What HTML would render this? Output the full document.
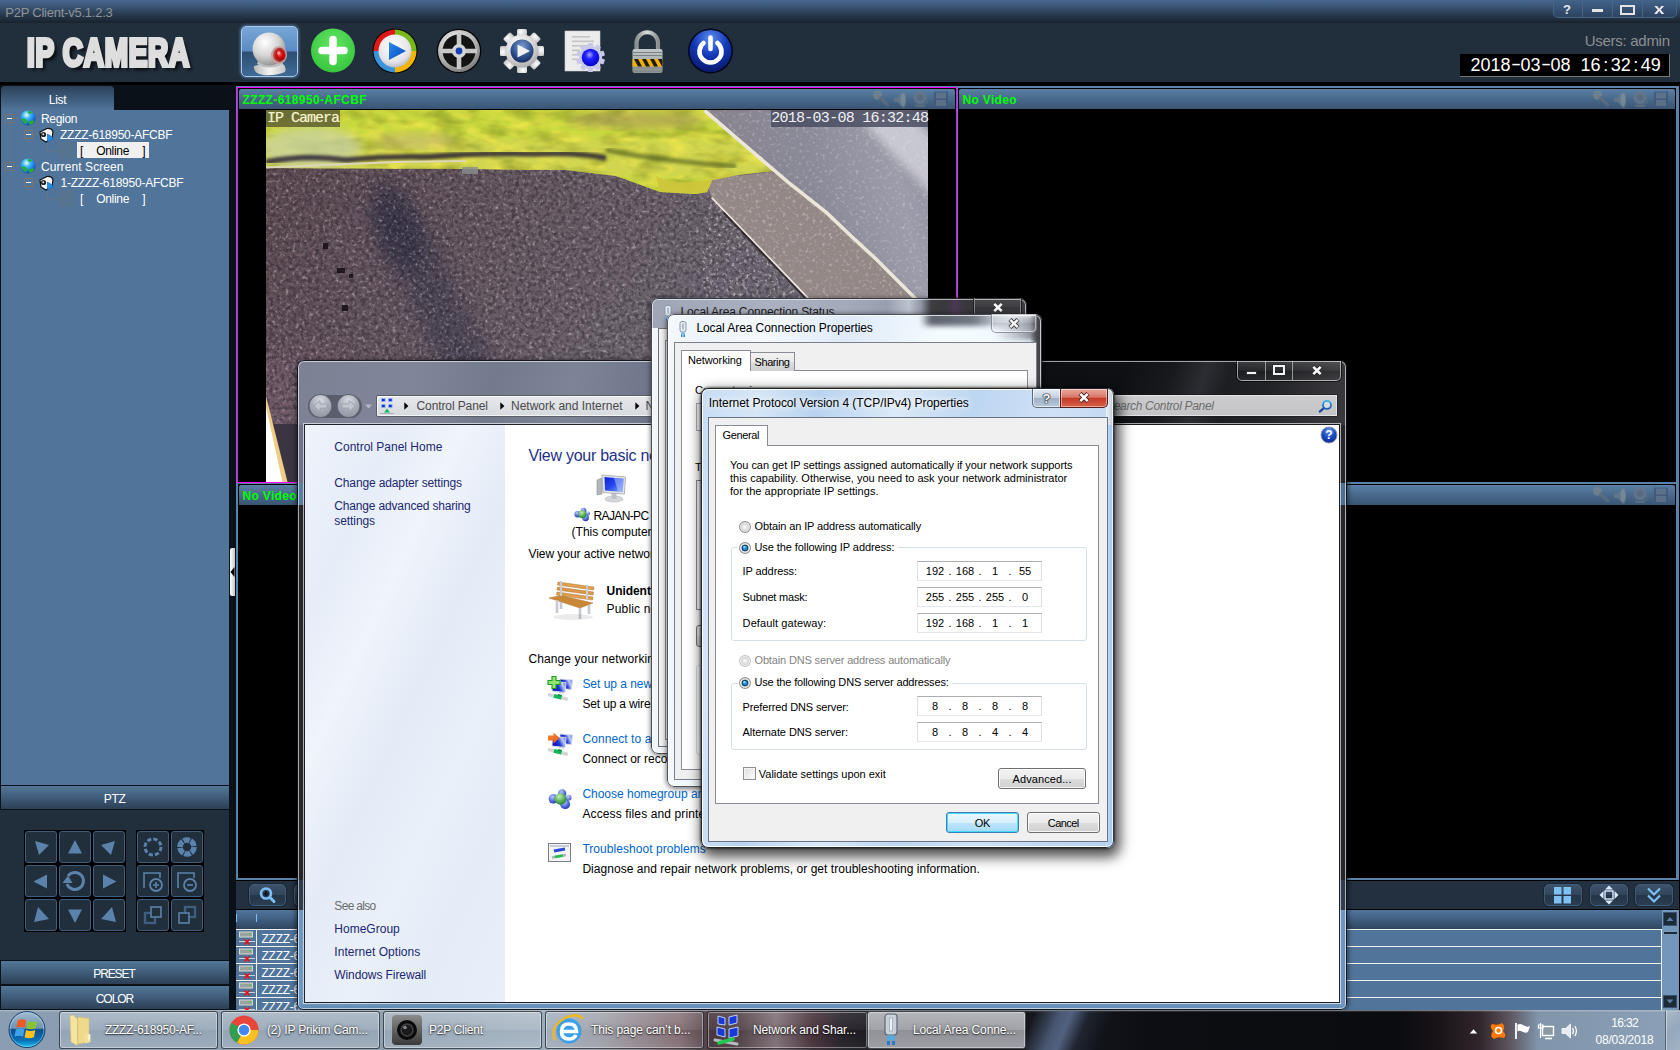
<!DOCTYPE html>
<html lang="en"><head><meta charset="utf-8"><title>P2P Client</title>
<style>
html,body{margin:0;padding:0;background:#000;}
body{width:1680px;height:1050px;overflow:hidden;position:relative;font-family:"Liberation Sans",sans-serif;}
.L{position:absolute;overflow:hidden;}
.L>div,.L>svg,.L>span{position:absolute;}
.t{white-space:pre;line-height:1;display:block;}
svg{overflow:hidden;display:block;}
</style></head>
<body>
<div class="L " style="left:0px;top:0px;width:1680px;height:1050px;background:#000;"><div style="left:0px;top:0px;width:1680px;height:23px;background:linear-gradient(#47688f 0%,#3c5878 25%,#2c4058 55%,#1f2c3b 85%,#19222d 100%);"></div>
<div style="left:0px;top:23px;width:1680px;height:59px;background:#212e3c;"></div>
<span class="t" style="left:5.3px;top:6px;font-size:13px;color:#8f9397;letter-spacing:-0.238px;">P2P Client-v5.1.2.3</span>
<div style="left:1553px;top:-1px;width:124px;height:19px;border:1px solid #466686;border-radius:0 0 5px 5px;box-sizing:border-box;background:linear-gradient(#43638a,#2c4260);"></div>
<div style="left:1582px;top:0px;width:1px;height:17px;background:#466686;"></div>
<div style="left:1612px;top:0px;width:1px;height:17px;background:#466686;"></div>
<div style="left:1642px;top:0px;width:1px;height:17px;background:#466686;"></div>
<span class="t" style="left:1563.02px;top:3.2px;font-size:13px;color:#e8e8e8;font-weight:bold;">?</span>
<div style="left:1592px;top:9px;width:11px;height:3px;background:#e4e4e4;"></div>
<div style="left:1620px;top:5px;width:15px;height:10px;border:2px solid #e4e4e4;box-sizing:border-box;"></div>
<span class="t" style="left:1655.33px;top:0.5px;font-size:15px;color:#e8e8e8;font-weight:bold;transform:scaleX(1.25);">x</span>
<span class="t" style="left:27.3px;top:33px;font-size:39px;color:#dedede;font-weight:bold;letter-spacing:1px;transform-origin:0 0;transform:scaleX(0.717);-webkit-text-stroke:4px #dedede;text-shadow:5px 4px 4px rgba(0,0,0,.8);">IP CAMERA</span>
<span class="t" style="left:1584.8px;top:32.8px;font-size:15px;color:#8e9093;letter-spacing:-0.287px;">Users: admin</span>
<div style="left:1460px;top:54px;width:210px;height:23px;background:#000;border-right:1px solid #777;border-bottom:1px solid #777;box-sizing:border-box;"></div>
<div class="t" style="left:1470.5px;top:54.5px;font-size:18px;color:#fff;line-height:20px;width:200px;">2018<span style="display:inline-block;width:10px;text-align:center;transform:scaleX(1.7) translateY(-1.5px);">-</span>03<span style="display:inline-block;width:10px;text-align:center;transform:scaleX(1.7) translateY(-1.5px);">-</span>08<span style="display:inline-block;width:10px;text-align:center;">&nbsp;</span>16<span style="display:inline-block;width:10px;text-align:center;">:</span>32<span style="display:inline-block;width:10px;text-align:center;">:</span>49</div>
<div style="left:241px;top:26px;width:57px;height:51px;border-radius:5px;background:linear-gradient(#79a6d6 0%,#5a8cc4 48%,#2e4f72 52%,#3f6a96 100%);border:1px solid #a8c8ea;box-sizing:border-box;box-shadow:0 0 3px 1px rgba(120,170,230,.55);"></div>
<svg style="left:241px;top:26px;" width="57" height="51" viewBox="0 0 57 51">
<defs>
 <radialGradient id="wc1" cx="0.38" cy="0.3" r="0.75"><stop offset="0" stop-color="#ffffff"/><stop offset="0.55" stop-color="#d4d4d4"/><stop offset="1" stop-color="#8c8c8c"/></radialGradient>
 <radialGradient id="wc2" cx="0.45" cy="0.4" r="0.6"><stop offset="0" stop-color="#ff5a5a"/><stop offset="0.5" stop-color="#e01010"/><stop offset="1" stop-color="#8a0000"/></radialGradient>
 <linearGradient id="wc3" x1="0" y1="0" x2="1" y2="0"><stop offset="0" stop-color="#b8b8b8"/><stop offset="0.5" stop-color="#f4f4f4"/><stop offset="1" stop-color="#c4c4c4"/></linearGradient>
</defs>
<path d="M13 40 Q12 47 22 49 Q34 50 44 46 Q46 41 42 38 Q30 35 13 40Z" fill="url(#wc3)"/>
<path d="M16 38 Q28 45 42 38 L40 33 L18 33Z" fill="#bdbdbd"/>
<circle cx="28" cy="23" r="16.5" fill="url(#wc1)"/>
<ellipse cx="38" cy="29" rx="8" ry="9" fill="#c9a0a0"/>
<ellipse cx="38.5" cy="29" rx="6.3" ry="7.2" fill="#b23a3a"/>
<ellipse cx="39" cy="29" rx="4.6" ry="5.4" fill="url(#wc2)"/>
<ellipse cx="37.8" cy="27" rx="1.6" ry="1.8" fill="#ff9c9c"/>
</svg>
<svg style="left:310px;top:28px;" width="46" height="46" viewBox="0 0 46 46">
<defs><radialGradient id="pl1" cx="0.5" cy="0.35" r="0.7"><stop offset="0" stop-color="#62e462"/><stop offset="1" stop-color="#35c43c"/></radialGradient></defs>
<circle cx="23" cy="22.5" r="22" fill="url(#pl1)"/>
<path d="M23 11.5 V33.5 M12 22.5 H34" stroke="#fff" stroke-width="7.5" stroke-linecap="round" fill="none"/>
</svg>
<svg style="left:372px;top:28px;" width="46" height="46" viewBox="0 0 46 46">
<defs><radialGradient id="mp1" cx="0.45" cy="0.35" r="0.7"><stop offset="0" stop-color="#ffffff"/><stop offset="0.7" stop-color="#e4e4e8"/><stop offset="1" stop-color="#b0b0b8"/></radialGradient>
<linearGradient id="mp2" x1="0" y1="0" x2="1" y2="1"><stop offset="0" stop-color="#2a8cf0"/><stop offset="1" stop-color="#0a48b8"/></linearGradient></defs>
<circle cx="23" cy="23" r="22.5" fill="#050505"/>
<path d="M23 23 L23 1.5 A21.5 21.5 0 0 0 1.5 23Z" fill="#e01818"/>
<path d="M23 23 L44.5 23 A21.5 21.5 0 0 0 23 1.5Z" fill="#78b818"/>
<path d="M23 23 L1.5 23 A21.5 21.5 0 0 0 23 44.5Z" fill="#3a94dc"/>
<path d="M23 23 L23 44.5 A21.5 21.5 0 0 0 44.5 23Z" fill="#f4b400"/>
<circle cx="23" cy="23" r="16.5" fill="url(#mp1)"/>
<path d="M17 14 L34 23 L17 32Z" fill="url(#mp2)"/>
</svg>
<svg style="left:436px;top:28px;" width="46" height="46" viewBox="0 0 46 46">
<defs><radialGradient id="fr1" cx="0.4" cy="0.3" r="0.8"><stop offset="0" stop-color="#f4f4f4"/><stop offset="0.6" stop-color="#b4b4b4"/><stop offset="1" stop-color="#6a6a6a"/></radialGradient></defs>
<circle cx="23" cy="23" r="22.3" fill="#060606"/>
<circle cx="23" cy="23" r="21" fill="url(#fr1)"/>
<circle cx="23" cy="23" r="16.5" fill="#141414"/>
<path d="M23 5 V41 M5 23 H41" stroke="#c8c8c8" stroke-width="4.6"/>
<circle cx="23" cy="23" r="7" fill="#d4d4d4"/>
<circle cx="23" cy="23" r="3.4" fill="#1840b0"/>
</svg>
<svg style="left:499px;top:28px;" width="46" height="46" viewBox="0 0 46 46">
<defs><radialGradient id="g1" cx="0.4" cy="0.3" r="0.8"><stop offset="0" stop-color="#ffffff"/><stop offset="0.6" stop-color="#d2d2d2"/><stop offset="1" stop-color="#a0a0a0"/></radialGradient>
<radialGradient id="g2" cx="0.5" cy="0.3" r="0.8"><stop offset="0" stop-color="#7a9cd0"/><stop offset="0.6" stop-color="#2a4a88"/><stop offset="1" stop-color="#10204a"/></radialGradient></defs>
<g transform="translate(23,23)" fill="url(#g1)"><rect x="-5" y="-22" width="10" height="9" rx="1.5" transform="rotate(0)"/><rect x="-5" y="-22" width="10" height="9" rx="1.5" transform="rotate(45)"/><rect x="-5" y="-22" width="10" height="9" rx="1.5" transform="rotate(90)"/><rect x="-5" y="-22" width="10" height="9" rx="1.5" transform="rotate(135)"/><rect x="-5" y="-22" width="10" height="9" rx="1.5" transform="rotate(180)"/><rect x="-5" y="-22" width="10" height="9" rx="1.5" transform="rotate(225)"/><rect x="-5" y="-22" width="10" height="9" rx="1.5" transform="rotate(270)"/><rect x="-5" y="-22" width="10" height="9" rx="1.5" transform="rotate(315)"/><circle r="16.5"/></g>
<circle cx="23" cy="23" r="11.5" fill="url(#g2)"/>
<path d="M18.5 16.5 L31 23 L18.5 29.5Z" fill="#f0f0f0"/>
</svg>
<svg style="left:563px;top:28px;" width="46" height="46" viewBox="0 0 46 46">
<defs><radialGradient id="d2" cx="0.45" cy="0.35" r="0.7"><stop offset="0" stop-color="#a8a8ff"/><stop offset="0.35" stop-color="#2020ff"/><stop offset="1" stop-color="#0000c0"/></radialGradient></defs>
<rect x="2" y="3" width="35" height="40" fill="#ececec" stroke="#d0d0d0" stroke-width="0.6"/>
<g fill="#c4c4c4"><rect x="9" y="8" width="18" height="1.6"/><rect x="9" y="12.5" width="22" height="1.6"/><rect x="9" y="17" width="20" height="1.6"/><rect x="9" y="21.5" width="8" height="1.6"/><rect x="9" y="26" width="6" height="1.6"/><rect x="9" y="30.5" width="6" height="1.6"/></g>
<g transform="translate(27.5,29.5)" fill="#c8c8e8"><rect x="-2.6" y="-14.5" width="5.2" height="5" rx="1" transform="rotate(0)"/><rect x="-2.6" y="-14.5" width="5.2" height="5" rx="1" transform="rotate(36)"/><rect x="-2.6" y="-14.5" width="5.2" height="5" rx="1" transform="rotate(72)"/><rect x="-2.6" y="-14.5" width="5.2" height="5" rx="1" transform="rotate(108)"/><rect x="-2.6" y="-14.5" width="5.2" height="5" rx="1" transform="rotate(144)"/><rect x="-2.6" y="-14.5" width="5.2" height="5" rx="1" transform="rotate(180)"/><rect x="-2.6" y="-14.5" width="5.2" height="5" rx="1" transform="rotate(216)"/><rect x="-2.6" y="-14.5" width="5.2" height="5" rx="1" transform="rotate(252)"/><rect x="-2.6" y="-14.5" width="5.2" height="5" rx="1" transform="rotate(288)"/><rect x="-2.6" y="-14.5" width="5.2" height="5" rx="1" transform="rotate(324)"/><circle r="11.5"/></g>
<circle cx="27.5" cy="29.5" r="8.8" fill="url(#d2)"/>
</svg>
<svg style="left:626px;top:27px;" width="44" height="48" viewBox="0 0 44 48">
<defs><linearGradient id="lk1" x1="0" y1="0" x2="1" y2="0"><stop offset="0" stop-color="#8a9090"/><stop offset="0.5" stop-color="#d8dcdc"/><stop offset="1" stop-color="#8a9090"/></linearGradient>
<linearGradient id="lk2" x1="0" y1="0" x2="0" y2="1"><stop offset="0" stop-color="#c4c8c8"/><stop offset="1" stop-color="#8c9292"/></linearGradient></defs>
<path d="M10.5 24 V15 A10.8 10.8 0 0 1 32 15 V24" fill="none" stroke="url(#lk1)" stroke-width="4.2"/>
<rect x="6.5" y="22" width="30" height="24" rx="2" fill="url(#lk2)"/>
<g stroke="#7c8282" stroke-width="1"><path d="M6.5 25.5h30M6.5 28.5h30M6.5 41h30M6.5 44h30"/></g>
<rect x="6.5" y="32" width="30" height="7.5" fill="#f4b000"/>
<g fill="#1c1c1c"><path d="M8 32 h4 l4 7.5 h-4z"/><path d="M16 32 h4 l4 7.5 h-4z"/><path d="M24 32 h4 l4 7.5 h-4z"/><path d="M32 32 h4 l0.5 1 v6.5 h-0.5z"/></g>
</svg>
<svg style="left:687px;top:28px;" width="46" height="46" viewBox="0 0 46 46">
<defs><radialGradient id="pw1" cx="0.5" cy="0.2" r="0.9"><stop offset="0" stop-color="#5a8cf0"/><stop offset="0.45" stop-color="#1438b8"/><stop offset="1" stop-color="#04125a"/></radialGradient></defs>
<circle cx="23.5" cy="23" r="22.5" fill="#03061a"/>
<circle cx="23.5" cy="23" r="21" fill="url(#pw1)"/>
<path d="M16.5 15 A11 11 0 1 0 30.5 15" fill="none" stroke="#fff" stroke-width="4.6" stroke-linecap="round"/>
<path d="M23.5 9.5 V21" stroke="#fff" stroke-width="4.6" stroke-linecap="round"/>
</svg>
<div style="left:0px;top:85px;width:236px;height:925px;background:#0b1118;"></div>
<div style="left:1px;top:86px;width:113px;height:24px;background:linear-gradient(#2d4157 0%,#3a5573 40%,#50749a 100%);border-radius:4px 4px 0 0;"></div>
<span class="t" style="left:48.7px;top:93.9px;font-size:12px;color:#fff;letter-spacing:-0.229px;">List</span>
<div style="left:1px;top:110px;width:228px;height:675px;background:#50749a;"></div>
<div style="left:9px;top:123px;width:1px;height:40px;background-image:linear-gradient(#7c746b 50%,transparent 50%);background-size:1px 2px;"></div>
<div style="left:28px;top:139px;width:1px;height:4px;background-image:linear-gradient(#7c746b 50%,transparent 50%);background-size:1px 2px;"></div>
<div style="left:47px;top:143px;width:1px;height:8px;background-image:linear-gradient(#7c746b 50%,transparent 50%);background-size:1px 2px;"></div>
<div style="left:47px;top:150px;width:26px;height:1px;background-image:linear-gradient(90deg,#7c746b 50%,transparent 50%);background-size:2px 1px;"></div>
<div style="left:28px;top:187px;width:1px;height:4px;background-image:linear-gradient(#7c746b 50%,transparent 50%);background-size:1px 2px;"></div>
<div style="left:47px;top:191px;width:1px;height:8px;background-image:linear-gradient(#7c746b 50%,transparent 50%);background-size:1px 2px;"></div>
<div style="left:47px;top:198px;width:26px;height:1px;background-image:linear-gradient(90deg,#7c746b 50%,transparent 50%);background-size:2px 1px;"></div>
<div style="left:14px;top:118px;width:6px;height:1px;background-image:linear-gradient(90deg,#7c746b 50%,transparent 50%);background-size:2px 1px;"></div>
<div style="left:33px;top:134px;width:6px;height:1px;background-image:linear-gradient(90deg,#7c746b 50%,transparent 50%);background-size:2px 1px;"></div>
<div style="left:14px;top:166px;width:6px;height:1px;background-image:linear-gradient(90deg,#7c746b 50%,transparent 50%);background-size:2px 1px;"></div>
<div style="left:33px;top:182px;width:6px;height:1px;background-image:linear-gradient(90deg,#7c746b 50%,transparent 50%);background-size:2px 1px;"></div>
<div style="left:58px;top:142px;width:16px;height:17px;background:#56738f;"></div>
<div style="left:58px;top:190px;width:16px;height:17px;background:#56738f;"></div>
<div style="left:5px;top:114px;width:9px;height:9px;border:1px solid #7c746b;box-sizing:border-box;background:#50749a;"></div>
<div style="left:7px;top:118px;width:5px;height:1px;background:#fff;"></div>
<div style="left:24px;top:130px;width:9px;height:9px;border:1px solid #7c746b;box-sizing:border-box;background:#50749a;"></div>
<div style="left:26px;top:134px;width:5px;height:1px;background:#fff;"></div>
<div style="left:5px;top:162px;width:9px;height:9px;border:1px solid #7c746b;box-sizing:border-box;background:#50749a;"></div>
<div style="left:7px;top:166px;width:5px;height:1px;background:#fff;"></div>
<div style="left:24px;top:178px;width:9px;height:9px;border:1px solid #7c746b;box-sizing:border-box;background:#50749a;"></div>
<div style="left:26px;top:182px;width:5px;height:1px;background:#fff;"></div>
<svg style="left:20px;top:110px;" width="16" height="16" viewBox="0 0 16 16">
<defs><radialGradient id="gl1" cx="0.4" cy="0.3" r="0.75"><stop offset="0" stop-color="#e8faff"/><stop offset="0.35" stop-color="#38b8ff"/><stop offset="1" stop-color="#0838c0"/></radialGradient></defs>
<circle cx="8" cy="8" r="7.6" fill="url(#gl1)"/>
<path d="M1.5 9 Q4 7.5 6 9.5 Q8 12 5.5 14.5 Q2.5 13 1.5 9Z M9.5 11 Q12 9.5 14.5 11 Q13 14.5 9.5 15.3 Q8.5 13 9.5 11Z M8 1 Q11 1 12.5 3 Q10 4.5 8 3.2Z" fill="#28b028"/>
</svg>
<svg style="left:20px;top:158px;" width="16" height="16" viewBox="0 0 16 16">
<defs><radialGradient id="gl1" cx="0.4" cy="0.3" r="0.75"><stop offset="0" stop-color="#e8faff"/><stop offset="0.35" stop-color="#38b8ff"/><stop offset="1" stop-color="#0838c0"/></radialGradient></defs>
<circle cx="8" cy="8" r="7.6" fill="url(#gl1)"/>
<path d="M1.5 9 Q4 7.5 6 9.5 Q8 12 5.5 14.5 Q2.5 13 1.5 9Z M9.5 11 Q12 9.5 14.5 11 Q13 14.5 9.5 15.3 Q8.5 13 9.5 11Z M8 1 Q11 1 12.5 3 Q10 4.5 8 3.2Z" fill="#28b028"/>
</svg>
<svg style="left:38px;top:126.5px;" width="17" height="16" viewBox="0 0 17 16">
<path d="M2 5 L9 1.5 Q14 1 15 5 L14 11 L8 15 L3 12 Z" fill="#f4f4f4" stroke="#111" stroke-width="1.2"/>
<circle cx="5.5" cy="7.5" r="2.6" fill="#222"/><circle cx="5.2" cy="7.2" r="1" fill="#ddd"/>
<path d="M9.5 7 L15.5 11 L9.5 15.5Z" fill="#1e90e8" stroke="#0a5aa8" stroke-width="0.6"/>
</svg>
<svg style="left:38px;top:174.5px;" width="17" height="16" viewBox="0 0 17 16">
<path d="M2 5 L9 1.5 Q14 1 15 5 L14 11 L8 15 L3 12 Z" fill="#f4f4f4" stroke="#111" stroke-width="1.2"/>
<circle cx="5.5" cy="7.5" r="2.6" fill="#222"/><circle cx="5.2" cy="7.2" r="1" fill="#ddd"/>
<path d="M9.5 7 L15.5 11 L9.5 15.5Z" fill="#1e90e8" stroke="#0a5aa8" stroke-width="0.6"/>
</svg>
<span class="t" style="left:41px;top:112.6px;font-size:12px;color:#fff;letter-spacing:-0.306px;">Region</span>
<span class="t" style="left:60px;top:128.6px;font-size:12px;color:#fff;letter-spacing:-0.263px;">ZZZZ-618950-AFCBF</span>
<div style="left:77px;top:142px;width:72px;height:16px;background:#f0f0f0;"></div>
<span class="t" style="left:80px;top:144.6px;font-size:12px;color:#000;letter-spacing:-0.3px;word-spacing:1.35px;">[   Online   ]</span>
<span class="t" style="left:41px;top:160.6px;font-size:12px;color:#fff;letter-spacing:0.087px;">Current Screen</span>
<span class="t" style="left:60.5px;top:176.6px;font-size:12px;color:#fff;letter-spacing:-0.242px;">1-ZZZZ-618950-AFCBF</span>
<span class="t" style="left:80px;top:192.6px;font-size:12px;color:#fff;letter-spacing:-0.3px;word-spacing:1.35px;">[   Online   ]</span>
<div style="left:230px;top:548px;width:5px;height:48px;background:linear-gradient(90deg,#fff,#c8c8c8);border-radius:2px 0 0 2px;"></div>
<svg style="left:230px;top:566px;" width="5" height="12" viewBox="0 0 5 12"><path d="M4.5 1 L0.5 6 L4.5 11Z" fill="#000"/></svg>
<div style="left:1px;top:786px;width:228px;height:23px;background:linear-gradient(#537797 0%,#436280 40%,#2c3f55 100%);"></div>
<span class="t" style="left:103.8px;top:792.8px;font-size:12px;color:#fff;letter-spacing:-0.336px;">PTZ</span>
<div style="left:0px;top:810px;width:229px;height:150px;background:#212e3c;"></div>
<div style="left:1px;top:961px;width:228px;height:23px;background:linear-gradient(#537797 0%,#436280 40%,#2c3f55 100%);"></div>
<span class="t" style="left:93.25px;top:967.8px;font-size:12px;color:#fff;letter-spacing:-1.103px;">PRESET</span>
<div style="left:1px;top:986px;width:228px;height:23px;background:linear-gradient(#537797 0%,#436280 40%,#2c3f55 100%);"></div>
<span class="t" style="left:95.75px;top:992.8px;font-size:12px;color:#fff;letter-spacing:-1.047px;">COLOR</span>
<div style="left:24px;top:830px;width:34px;height:34px;background:#000;"></div>
<div style="left:25px;top:831px;width:32px;height:32px;border:1px solid #3f5d7c;border-radius:3px;box-sizing:border-box;background:#212e3c;"></div>
<svg style="left:24px;top:830px;" width="34" height="34" viewBox="0 0 34 34"><path d="M11 11 L25 15 L15 25Z" fill="#5a82aa"/></svg>
<div style="left:58px;top:830px;width:34px;height:34px;background:#000;"></div>
<div style="left:59px;top:831px;width:32px;height:32px;border:1px solid #3f5d7c;border-radius:3px;box-sizing:border-box;background:#212e3c;"></div>
<svg style="left:58px;top:830px;" width="34" height="34" viewBox="0 0 34 34"><path d="M0 -7.5 L7 6 L-7 6Z" fill="#5a82aa" transform="translate(17,17.5) rotate(0)"/></svg>
<div style="left:92px;top:830px;width:34px;height:34px;background:#000;"></div>
<div style="left:93px;top:831px;width:32px;height:32px;border:1px solid #3f5d7c;border-radius:3px;box-sizing:border-box;background:#212e3c;"></div>
<svg style="left:92px;top:830px;" width="34" height="34" viewBox="0 0 34 34"><path d="M23 11 L9 15 L19 25Z" fill="#5a82aa"/></svg>
<div style="left:24px;top:864px;width:34px;height:34px;background:#000;"></div>
<div style="left:25px;top:865px;width:32px;height:32px;border:1px solid #3f5d7c;border-radius:3px;box-sizing:border-box;background:#212e3c;"></div>
<svg style="left:24px;top:864px;" width="34" height="34" viewBox="0 0 34 34"><path d="M0 -7.5 L7 6 L-7 6Z" fill="#5a82aa" transform="translate(17,17.5) rotate(270)"/></svg>
<div style="left:58px;top:864px;width:34px;height:34px;background:#000;"></div>
<div style="left:59px;top:865px;width:32px;height:32px;border:1px solid #3f5d7c;border-radius:3px;box-sizing:border-box;background:#212e3c;"></div>
<svg style="left:58px;top:864px;" width="34" height="34" viewBox="0 0 34 34"><path d="M10 12 A8.5 8.5 0 1 1 9 20" fill="none" stroke="#5a82aa" stroke-width="3"/><path d="M4.5 19 L10 11.5 L14.5 19Z" fill="#5a82aa"/></svg>
<div style="left:92px;top:864px;width:34px;height:34px;background:#000;"></div>
<div style="left:93px;top:865px;width:32px;height:32px;border:1px solid #3f5d7c;border-radius:3px;box-sizing:border-box;background:#212e3c;"></div>
<svg style="left:92px;top:864px;" width="34" height="34" viewBox="0 0 34 34"><path d="M0 -7.5 L7 6 L-7 6Z" fill="#5a82aa" transform="translate(17,17.5) rotate(90)"/></svg>
<div style="left:24px;top:898px;width:34px;height:34px;background:#000;"></div>
<div style="left:25px;top:899px;width:32px;height:32px;border:1px solid #3f5d7c;border-radius:3px;box-sizing:border-box;background:#212e3c;"></div>
<svg style="left:24px;top:898px;" width="34" height="34" viewBox="0 0 34 34"><path d="M14 9 L25 21 L10 24Z" fill="#5a82aa"/></svg>
<div style="left:58px;top:898px;width:34px;height:34px;background:#000;"></div>
<div style="left:59px;top:899px;width:32px;height:32px;border:1px solid #3f5d7c;border-radius:3px;box-sizing:border-box;background:#212e3c;"></div>
<svg style="left:58px;top:898px;" width="34" height="34" viewBox="0 0 34 34"><path d="M0 -7.5 L7 6 L-7 6Z" fill="#5a82aa" transform="translate(17,17.5) rotate(180)"/></svg>
<div style="left:92px;top:898px;width:34px;height:34px;background:#000;"></div>
<div style="left:93px;top:899px;width:32px;height:32px;border:1px solid #3f5d7c;border-radius:3px;box-sizing:border-box;background:#212e3c;"></div>
<svg style="left:92px;top:898px;" width="34" height="34" viewBox="0 0 34 34"><path d="M20 9 L9 21 L24 24Z" fill="#5a82aa"/></svg>
<div style="left:136px;top:830px;width:34px;height:34px;background:#000;"></div>
<div style="left:137px;top:831px;width:32px;height:32px;border:1px solid #3f5d7c;border-radius:3px;box-sizing:border-box;background:#212e3c;"></div>
<svg style="left:136px;top:830px;" width="34" height="34" viewBox="0 0 34 34"><circle cx="17" cy="17" r="8" fill="none" stroke="#5a82aa" stroke-width="3" stroke-dasharray="4.2 2.1"/></svg>
<div style="left:170px;top:830px;width:34px;height:34px;background:#000;"></div>
<div style="left:171px;top:831px;width:32px;height:32px;border:1px solid #3f5d7c;border-radius:3px;box-sizing:border-box;background:#212e3c;"></div>
<svg style="left:170px;top:830px;" width="34" height="34" viewBox="0 0 34 34"><circle cx="17" cy="17" r="7" fill="none" stroke="#5a82aa" stroke-width="5.5" stroke-dasharray="6.3 1"/></svg>
<div style="left:136px;top:864px;width:34px;height:34px;background:#000;"></div>
<div style="left:137px;top:865px;width:32px;height:32px;border:1px solid #3f5d7c;border-radius:3px;box-sizing:border-box;background:#212e3c;"></div>
<svg style="left:136px;top:864px;" width="34" height="34" viewBox="0 0 34 34"><path d="M8 24 V9 H24 V14" fill="none" stroke="#5a82aa" stroke-width="1.6"/><circle cx="20" cy="21" r="6" fill="none" stroke="#5a82aa" stroke-width="1.8"/><path d="M17 21h6M20 18v6" stroke="#5a82aa" stroke-width="1.6"/></svg>
<div style="left:170px;top:864px;width:34px;height:34px;background:#000;"></div>
<div style="left:171px;top:865px;width:32px;height:32px;border:1px solid #3f5d7c;border-radius:3px;box-sizing:border-box;background:#212e3c;"></div>
<svg style="left:170px;top:864px;" width="34" height="34" viewBox="0 0 34 34"><path d="M8 24 V9 H24 V14" fill="none" stroke="#5a82aa" stroke-width="1.6"/><circle cx="20" cy="21" r="6" fill="none" stroke="#5a82aa" stroke-width="1.8"/><path d="M17 21h6" stroke="#5a82aa" stroke-width="1.6"/></svg>
<div style="left:136px;top:898px;width:34px;height:34px;background:#000;"></div>
<div style="left:137px;top:899px;width:32px;height:32px;border:1px solid #3f5d7c;border-radius:3px;box-sizing:border-box;background:#212e3c;"></div>
<svg style="left:136px;top:898px;" width="34" height="34" viewBox="0 0 34 34"><rect x="9" y="15" width="10" height="10" fill="none" stroke="#3f5d7c" stroke-width="2.4"/><rect x="15" y="9" width="10" height="10" fill="#212e3c" stroke="#5a82aa" stroke-width="1.6"/></svg>
<div style="left:170px;top:898px;width:34px;height:34px;background:#000;"></div>
<div style="left:171px;top:899px;width:32px;height:32px;border:1px solid #3f5d7c;border-radius:3px;box-sizing:border-box;background:#212e3c;"></div>
<svg style="left:170px;top:898px;" width="34" height="34" viewBox="0 0 34 34"><rect x="15" y="9" width="10" height="10" fill="none" stroke="#3f5d7c" stroke-width="2.4"/><rect x="9" y="15" width="10" height="10" fill="#212e3c" stroke="#5a82aa" stroke-width="1.6"/></svg>
<div style="left:236px;top:86px;width:1443px;height:794px;background:#5b83aa;"></div>
<div style="left:237px;top:87px;width:720px;height:396px;background:#000;border:1px solid #ff00ff;box-sizing:border-box;"></div>
<div style="left:239px;top:89px;width:716px;height:20px;background:linear-gradient(#5a80a6 0%,#4a6b8d 45%,#3a5574 100%);border-radius:2px 2px 0 0;"></div>
<span class="t" style="left:242.5px;top:93.6px;font-size:12px;color:#00ff00;font-weight:bold;letter-spacing:0.374px;">ZZZZ-618950-AFCBF</span>
<svg style="left:872px;top:89px;" width="83" height="20" viewBox="0 0 83 20">
<g fill="#6d7f90" stroke="none" opacity="0.85">
 <circle cx="5.5" cy="6" r="4.6" fill="#71838f"/>
 <path d="M6.5 9.5 L9.5 6.8 L17 15.5 Q17.5 17.5 15 17.5 Z" fill="#5c6d7e"/>
 <path d="M22.5 8.5 h3 l5.5 -6.5 q3 0 3 8.5 q0 8.5 -3 8.5 l-5.5 -6 h-3 q-1.5 -2.2 0 -4.5z" fill="#667889"/>
 <ellipse cx="31" cy="10.5" rx="2.6" ry="6.5" fill="#7c8d9c"/>
 <circle cx="48" cy="8.5" r="6.6" fill="#64768a"/>
 <circle cx="48" cy="8.5" r="3.2" fill="#5a6b7e"/>
 <rect x="43" y="15.6" width="10" height="2.4" rx="1" fill="#5e6f80"/>
 <path d="M55.5 7 q1.5 5 -2.5 9" fill="none" stroke="#5e6f80" stroke-width="1.2"/>
 <rect x="62" y="2.5" width="14" height="15.5" fill="#41597a"/>
 <rect x="64" y="3.5" width="10" height="6" fill="#5f728a"/>
 <rect x="64" y="11" width="10" height="6" fill="#5f728a"/>
</g></svg>
<div style="left:957px;top:87px;width:720px;height:396px;background:#000;border:1px solid #5b83aa;box-sizing:border-box;"></div>
<div style="left:959px;top:89px;width:716px;height:20px;background:linear-gradient(#5a80a6 0%,#4a6b8d 45%,#3a5574 100%);border-radius:2px 2px 0 0;"></div>
<span class="t" style="left:962.5px;top:93.6px;font-size:12px;color:#00ff00;font-weight:bold;letter-spacing:0.315px;">No Video</span>
<svg style="left:1592px;top:89px;" width="83" height="20" viewBox="0 0 83 20">
<g fill="#6d7f90" stroke="none" opacity="0.85">
 <circle cx="5.5" cy="6" r="4.6" fill="#71838f"/>
 <path d="M6.5 9.5 L9.5 6.8 L17 15.5 Q17.5 17.5 15 17.5 Z" fill="#5c6d7e"/>
 <path d="M22.5 8.5 h3 l5.5 -6.5 q3 0 3 8.5 q0 8.5 -3 8.5 l-5.5 -6 h-3 q-1.5 -2.2 0 -4.5z" fill="#667889"/>
 <ellipse cx="31" cy="10.5" rx="2.6" ry="6.5" fill="#7c8d9c"/>
 <circle cx="48" cy="8.5" r="6.6" fill="#64768a"/>
 <circle cx="48" cy="8.5" r="3.2" fill="#5a6b7e"/>
 <rect x="43" y="15.6" width="10" height="2.4" rx="1" fill="#5e6f80"/>
 <path d="M55.5 7 q1.5 5 -2.5 9" fill="none" stroke="#5e6f80" stroke-width="1.2"/>
 <rect x="62" y="2.5" width="14" height="15.5" fill="#41597a"/>
 <rect x="64" y="3.5" width="10" height="6" fill="#5f728a"/>
 <rect x="64" y="11" width="10" height="6" fill="#5f728a"/>
</g></svg>
<div style="left:958px;top:87px;width:718px;height:1px;background:#5b83aa;"></div>
<div style="left:237px;top:483px;width:720px;height:396px;background:#000;border:1px solid #5b83aa;box-sizing:border-box;"></div>
<div style="left:239px;top:485px;width:716px;height:20px;background:linear-gradient(#5a80a6 0%,#4a6b8d 45%,#3a5574 100%);border-radius:2px 2px 0 0;"></div>
<span class="t" style="left:242.5px;top:489.6px;font-size:12px;color:#00ff00;font-weight:bold;letter-spacing:0.315px;">No Video</span>
<svg style="left:872px;top:485px;" width="83" height="20" viewBox="0 0 83 20">
<g fill="#6d7f90" stroke="none" opacity="0.85">
 <circle cx="5.5" cy="6" r="4.6" fill="#71838f"/>
 <path d="M6.5 9.5 L9.5 6.8 L17 15.5 Q17.5 17.5 15 17.5 Z" fill="#5c6d7e"/>
 <path d="M22.5 8.5 h3 l5.5 -6.5 q3 0 3 8.5 q0 8.5 -3 8.5 l-5.5 -6 h-3 q-1.5 -2.2 0 -4.5z" fill="#667889"/>
 <ellipse cx="31" cy="10.5" rx="2.6" ry="6.5" fill="#7c8d9c"/>
 <circle cx="48" cy="8.5" r="6.6" fill="#64768a"/>
 <circle cx="48" cy="8.5" r="3.2" fill="#5a6b7e"/>
 <rect x="43" y="15.6" width="10" height="2.4" rx="1" fill="#5e6f80"/>
 <path d="M55.5 7 q1.5 5 -2.5 9" fill="none" stroke="#5e6f80" stroke-width="1.2"/>
 <rect x="62" y="2.5" width="14" height="15.5" fill="#41597a"/>
 <rect x="64" y="3.5" width="10" height="6" fill="#5f728a"/>
 <rect x="64" y="11" width="10" height="6" fill="#5f728a"/>
</g></svg>
<div style="left:957px;top:483px;width:720px;height:396px;background:#000;border:1px solid #5b83aa;box-sizing:border-box;"></div>
<div style="left:959px;top:485px;width:716px;height:20px;background:linear-gradient(#5a80a6 0%,#4a6b8d 45%,#3a5574 100%);border-radius:2px 2px 0 0;"></div>
<span class="t" style="left:962.5px;top:489.6px;font-size:12px;color:#00ff00;font-weight:bold;letter-spacing:0.315px;">No Video</span>
<svg style="left:1592px;top:485px;" width="83" height="20" viewBox="0 0 83 20">
<g fill="#6d7f90" stroke="none" opacity="0.85">
 <circle cx="5.5" cy="6" r="4.6" fill="#71838f"/>
 <path d="M6.5 9.5 L9.5 6.8 L17 15.5 Q17.5 17.5 15 17.5 Z" fill="#5c6d7e"/>
 <path d="M22.5 8.5 h3 l5.5 -6.5 q3 0 3 8.5 q0 8.5 -3 8.5 l-5.5 -6 h-3 q-1.5 -2.2 0 -4.5z" fill="#667889"/>
 <ellipse cx="31" cy="10.5" rx="2.6" ry="6.5" fill="#7c8d9c"/>
 <circle cx="48" cy="8.5" r="6.6" fill="#64768a"/>
 <circle cx="48" cy="8.5" r="3.2" fill="#5a6b7e"/>
 <rect x="43" y="15.6" width="10" height="2.4" rx="1" fill="#5e6f80"/>
 <path d="M55.5 7 q1.5 5 -2.5 9" fill="none" stroke="#5e6f80" stroke-width="1.2"/>
 <rect x="62" y="2.5" width="14" height="15.5" fill="#41597a"/>
 <rect x="64" y="3.5" width="10" height="6" fill="#5f728a"/>
 <rect x="64" y="11" width="10" height="6" fill="#5f728a"/>
</g></svg>
<svg style="left:266px;top:110px;" width="662" height="372" viewBox="0 0 662 372">
<defs>
 <filter id="spk" x="0" y="0" width="100%" height="100%" color-interpolation-filters="sRGB"><feTurbulence type="fractalNoise" baseFrequency="0.3" numOctaves="2" seed="7"/><feColorMatrix values="0 0 0 0 0.96  0 0 0 0 0.94  0 0 0 0 0.96  3.4 0 0 0 -1.85"/></filter>
 <filter id="spd" x="0" y="0" width="100%" height="100%" color-interpolation-filters="sRGB"><feTurbulence type="fractalNoise" baseFrequency="0.26" numOctaves="2" seed="23"/><feColorMatrix values="0 0 0 0 0.1  0 0 0 0 0.08  0 0 0 0 0.12  0 2.8 0 0 -1.1"/></filter>
 <filter id="gz" x="0" y="0" width="100%" height="100%" color-interpolation-filters="sRGB"><feTurbulence type="fractalNoise" baseFrequency="0.03 0.07" numOctaves="3" seed="5"/><feColorMatrix values="0 0 0 0 0.45  0 0 0 0 0.50  0 0 0 0 0.12  2.6 0 0 0 -1.15"/></filter>
 <filter id="gy" x="0" y="0" width="100%" height="100%" color-interpolation-filters="sRGB"><feTurbulence type="fractalNoise" baseFrequency="0.05 0.09" numOctaves="2" seed="41"/><feColorMatrix values="0 0 0 0 0.93  0 0 0 0 0.9  0 0 0 0 0.3  0 2.6 0 0 -1.15"/></filter>
 <filter id="b14"><feGaussianBlur stdDeviation="13"/></filter>
 <filter id="b9"><feGaussianBlur stdDeviation="9"/></filter>
 <filter id="b5"><feGaussianBlur stdDeviation="5"/></filter>
 <filter id="b2"><feGaussianBlur stdDeviation="1.6"/></filter>
 <filter id="b1"><feGaussianBlur stdDeviation="0.7"/></filter>
 <linearGradient id="asp" x1="0" y1="0" x2="1" y2="0.4"><stop offset="0" stop-color="#5e4a52"/><stop offset="0.4" stop-color="#675962"/><stop offset="0.75" stop-color="#706873"/><stop offset="1" stop-color="#77727c"/></linearGradient>
 <linearGradient id="road" x1="0" y1="0.2" x2="1" y2="0"><stop offset="0" stop-color="#88828c"/><stop offset="0.45" stop-color="#8a8a98"/><stop offset="0.8" stop-color="#9c9caa"/><stop offset="1" stop-color="#908ea0"/></linearGradient>
 <clipPath id="grassc"><path d="M0 0 H438.5 L477.300 33.900 L508 61 L472 65 L446 70 L441 82 L430 84 L394 82 L350 66 L300 60 L200 59 L0 58Z"/></clipPath>
 <clipPath id="roadc"><path d="M438.5 0.3 L477.3 33.9 L522.3 72.3 L561.1 103.1 L584 125 L611 150 L647.8 187 L664 202.5 L664 202.5 L664 0 V0Z"/></clipPath>
 <clipPath id="aspc"><path d="M0 58 L200 59 L300 60 L350 66 L394 82 L430 84 L445 86 L700 372 H0Z"/></clipPath>
</defs>
<rect width="662" height="372" fill="url(#asp)"/>
<ellipse cx="40" cy="330" rx="90" ry="90" fill="#7c5e72" opacity="0.5" filter="url(#b14)"/>
<path d="M112 100 Q140 95 158 110 Q176 150 200 200 Q234 262 284 372 L226 372 Q190 290 160 224 Q130 160 112 100Z" fill="#403c50" opacity="0.62" filter="url(#b9)"/>
<ellipse cx="131" cy="118" rx="23" ry="46" transform="rotate(-18 131 118)" fill="#38344a" opacity="0.8" filter="url(#b9)"/>
<g clip-path="url(#aspc)"><rect width="662" height="372" filter="url(#spk)" opacity="0.4"/><rect width="662" height="372" filter="url(#spd)" opacity="0.4"/></g>
<!-- pavement -->
<path d="M445.7 87.7 L718.5 372 L664 372 L664 202.500 L664 202.5 L647.8 187 L611 150 L584 125 L561.1 103.1 L522.3 72.3 L506 62 L470 66 L436 60 Z" fill="#948887"/>
<path d="M445.7 87.7 L718.5 372 L664 372 L664 202.500 L664 202.5 L647.8 187 L611 150 L584 125 L561.1 103.1 L522.3 72.3 L506 62 L470 66 L436 60 Z" filter="url(#spk)" opacity="0.35"/>
<!-- road right -->
<path d="M438.5 0.3 L477.3 33.9 L522.3 72.3 L561.1 103.1 L584 125 L611 150 L647.8 187 L664 202.5 L664 0Z" fill="url(#road)"/>
<g clip-path="url(#roadc)"><path d="M585 0 L680 100 L680 40 L640 0Z" fill="#d4d4dc" opacity="0.8" filter="url(#b5)"/><path d="M500 60 L680 230" stroke="#80808e" stroke-width="18" opacity="0.4" filter="url(#b5)"/><rect width="662" height="372" filter="url(#spk)" opacity="0.3"/></g>
<!-- grass -->
<g clip-path="url(#grassc)">
 <rect width="662" height="100" fill="#c8d83e"/><rect y="28" width="662" height="40" fill="#e2d270" opacity="0.35" filter="url(#b5)"/>
 <rect width="662" height="100" filter="url(#gy)" opacity="0.9"/>
 <rect width="662" height="100" filter="url(#gz)" opacity="0.5"/>
 <ellipse cx="45" cy="38" rx="50" ry="22" fill="#c9d2a4" opacity="0.75" filter="url(#b5)"/>
 <ellipse cx="370" cy="10" rx="70" ry="9" fill="#a8945c" opacity="0.6" filter="url(#b5)"/>
 <ellipse cx="150" cy="30" rx="40" ry="8" fill="#c4b078" opacity="0.5" filter="url(#b5)"/>
 <path d="M0 52 Q40 44 80 50 Q120 46 160 47 Q220 42 270 44 Q310 42 340 48" stroke="#2a2434" stroke-width="5.5" fill="none" opacity="0.85" filter="url(#b2)"/>
 <path d="M340 40 Q400 52 470 56" stroke="#4a5a1c" stroke-width="5" fill="none" opacity="0.6" filter="url(#b2)"/>
 <path d="M390 66 Q420 80 470 62 L440 84 L394 82Z" fill="#cfc63a" opacity="0.9" filter="url(#b1)"/>
</g>
<path d="M0 57.500 L130 52 L200 51" stroke="#ddd6b8" stroke-width="1.800" fill="none" filter="url(#b1)"/>
<rect x="196" y="57" width="16" height="7" fill="#8a8e90" opacity="0.8" filter="url(#b1)"/>
<!-- kerb lines -->
<path d="M438.5 0.3 L477.3 33.9 L522.3 72.3 L561.1 103.1 L584 125 L611 150 L647.8 187 L664 202.5" stroke="#ece6d8" stroke-width="3.600" fill="none" filter="url(#b1)"/>
<path d="M445.7 87.7 L560.6 207.4" stroke="#f0e8dc" stroke-width="1.700" filter="url(#b1)"/>
<path d="M457.7 102.7 L558.6 208.4" stroke="#1c181c" stroke-width="2" opacity="0.7" filter="url(#b1)"/>
<!-- bottom-left white -->
<path d="M0 314 H60 V372 H0Z" fill="#3b3543"/><path d="M0 293 L0 372 L18.500 372 Z" fill="#fff"/>
<path d="M0 286 L21.500 372 L16.500 372 L0 297Z" fill="#f0cc84" filter="url(#b1)"/>
<g fill="#141018" opacity="0.85" filter="url(#b1)"><rect x="57" y="133" width="5" height="6"/><rect x="71" y="158" width="8" height="5"/><rect x="76" y="195" width="6" height="6"/><rect x="83" y="164" width="4" height="4"/></g>
</svg>
<div style="left:266px;top:110px;width:74px;height:17px;background:rgba(98,100,50,.88);"></div>
<span class="t" style="left:267px;top:111px;font-size:15px;color:#f6f2cc;font-family:'Liberation Mono', monospace;letter-spacing:-1.0px;text-shadow:0 0 1px rgba(255,255,220,.5);">IP Camera</span>
<div style="left:771px;top:110px;width:157px;height:17px;background:rgba(76,78,98,.86);"></div>
<span class="t" style="left:771.3px;top:111px;font-size:15px;color:#f0f0f4;font-family:'Liberation Mono', monospace;letter-spacing:-0.74px;">2018-03-08 16:32:48</span>
<div style="left:236px;top:880px;width:1444px;height:30px;background:#000;"></div>
<div style="left:236px;top:881px;width:1443px;height:28px;background:#223040;"></div>
<div style="left:249px;top:884px;width:37px;height:22px;border:1px solid #3e5c7a;border-radius:5px;box-sizing:border-box;background:linear-gradient(#3d5269 0%,#31455b 48%,#253547 52%,#2b3d51 100%);box-shadow:0 0 0 1px #1a2531;"></div>
<svg style="left:249px;top:884px;" width="37" height="22" viewBox="0 0 37 22"><circle cx="17" cy="9.5" r="5" fill="none" stroke="#7cc0f4" stroke-width="2.6"/><path d="M21 13.5 L25 17.5" stroke="#7cc0f4" stroke-width="3" stroke-linecap="round"/><path d="M14.5 9.5h5M17 7v5" stroke="#0d141c" stroke-width="1.8"/></svg>
<div style="left:294px;top:884px;width:37px;height:22px;border:1px solid #3e5c7a;border-radius:5px;box-sizing:border-box;background:linear-gradient(#3d5269 0%,#31455b 48%,#253547 52%,#2b3d51 100%);box-shadow:0 0 0 1px #1a2531;"></div>
<div style="left:1544px;top:884px;width:38px;height:22px;border:1px solid #3e5c7a;border-radius:5px;box-sizing:border-box;background:linear-gradient(#3d5269 0%,#31455b 48%,#253547 52%,#2b3d51 100%);box-shadow:0 0 0 1px #1a2531;"></div>
<div style="left:1590px;top:884px;width:38px;height:22px;border:1px solid #3e5c7a;border-radius:5px;box-sizing:border-box;background:linear-gradient(#3d5269 0%,#31455b 48%,#253547 52%,#2b3d51 100%);box-shadow:0 0 0 1px #1a2531;"></div>
<div style="left:1635px;top:884px;width:38px;height:22px;border:1px solid #3e5c7a;border-radius:5px;box-sizing:border-box;background:linear-gradient(#3d5269 0%,#31455b 48%,#253547 52%,#2b3d51 100%);box-shadow:0 0 0 1px #1a2531;"></div>
<svg style="left:1544px;top:884px;" width="38" height="22" viewBox="0 0 38 22"><g fill="#7cc0f4"><rect x="10" y="3" width="7.5" height="7.5"/><rect x="19.5" y="3" width="7.5" height="7.5"/><rect x="10" y="12" width="7.5" height="7.5"/><rect x="19.5" y="12" width="7.5" height="7.5"/></g></svg>
<svg style="left:1590px;top:884px;" width="38" height="22" viewBox="0 0 38 22"><rect x="15" y="7" width="8" height="8" fill="none" stroke="#d8ecff" stroke-width="1.4"/><g fill="#d8ecff"><path d="M19 1.5 l4 4 h-8z"/><path d="M19 20.5 l4 -4 h-8z"/><path d="M9.5 11 l4 -4 v8z"/><path d="M28.5 11 l-4 -4 v8z"/></g></svg>
<svg style="left:1635px;top:884px;" width="38" height="22" viewBox="0 0 38 22"><g fill="none" stroke="#7cc0f4" stroke-width="2.2"><path d="M13 4.5 l6 6 l6 -6"/><path d="M13 11.5 l6 6 l6 -6"/></g></svg>
<div style="left:236px;top:910px;width:1443px;height:100px;background:#50749a;"></div>
<div style="left:236px;top:910px;width:1443px;height:19px;background:linear-gradient(#52759a 0%,#45658a 35%,#2f455e 100%);"></div>
<div style="left:236px;top:914px;width:1px;height:8px;background:#7cc0f4;"></div>
<div style="left:256px;top:914px;width:1px;height:8px;background:#7cc0f4;"></div>
<div style="left:236px;top:929px;width:1426px;height:1px;background:#f0f0f0;"></div>
<div style="left:236px;top:946px;width:1426px;height:1px;background:#f0f0f0;"></div>
<div style="left:236px;top:963px;width:1426px;height:1px;background:#f0f0f0;"></div>
<div style="left:236px;top:980px;width:1426px;height:1px;background:#f0f0f0;"></div>
<div style="left:236px;top:997px;width:1426px;height:1px;background:#f0f0f0;"></div>
<div style="left:256px;top:929px;width:1px;height:81px;background:#f0f0f0;"></div>
<div style="left:1661px;top:929px;width:1px;height:81px;background:#f0f0f0;"></div>
<svg style="left:238px;top:930px;" width="18" height="16" viewBox="0 0 18 16"><rect x="1.5" y="2" width="13" height="5" fill="#9aa2a0" stroke="#d8d8d0" stroke-width="1"/><rect x="11.5" y="3" width="1.5" height="1.5" fill="#20e020"/><path d="M1 11.5h16" stroke="#c8d0d8" stroke-width="1"/><path d="M6.5 9.5l5 5M11.5 9.5l-5 5" stroke="#f01010" stroke-width="1.6"/></svg>
<span class="t" style="left:261.5px;top:933px;font-size:12px;color:#fff;letter-spacing:-0.263px;">ZZZZ-618950-AFCBF</span>
<svg style="left:238px;top:947px;" width="18" height="16" viewBox="0 0 18 16"><rect x="1.5" y="2" width="13" height="5" fill="#9aa2a0" stroke="#d8d8d0" stroke-width="1"/><rect x="11.5" y="3" width="1.5" height="1.5" fill="#20e020"/><path d="M1 11.5h16" stroke="#c8d0d8" stroke-width="1"/><path d="M6.5 9.5l5 5M11.5 9.5l-5 5" stroke="#f01010" stroke-width="1.6"/></svg>
<span class="t" style="left:261.5px;top:950px;font-size:12px;color:#fff;letter-spacing:-0.263px;">ZZZZ-618950-AFCBF</span>
<svg style="left:238px;top:964px;" width="18" height="16" viewBox="0 0 18 16"><rect x="1.5" y="2" width="13" height="5" fill="#9aa2a0" stroke="#d8d8d0" stroke-width="1"/><rect x="11.5" y="3" width="1.5" height="1.5" fill="#20e020"/><path d="M1 11.5h16" stroke="#c8d0d8" stroke-width="1"/><path d="M6.5 9.5l5 5M11.5 9.5l-5 5" stroke="#f01010" stroke-width="1.6"/></svg>
<span class="t" style="left:261.5px;top:967px;font-size:12px;color:#fff;letter-spacing:-0.263px;">ZZZZ-618950-AFCBF</span>
<svg style="left:238px;top:981px;" width="18" height="16" viewBox="0 0 18 16"><rect x="1.5" y="2" width="13" height="5" fill="#9aa2a0" stroke="#d8d8d0" stroke-width="1"/><rect x="11.5" y="3" width="1.5" height="1.5" fill="#20e020"/><path d="M1 11.5h16" stroke="#c8d0d8" stroke-width="1"/><path d="M6.5 9.5l5 5M11.5 9.5l-5 5" stroke="#f01010" stroke-width="1.6"/></svg>
<span class="t" style="left:261.5px;top:984px;font-size:12px;color:#fff;letter-spacing:-0.263px;">ZZZZ-618950-AFCBF</span>
<svg style="left:238px;top:998px;" width="18" height="16" viewBox="0 0 18 16"><rect x="1.5" y="2" width="13" height="5" fill="#9aa2a0" stroke="#d8d8d0" stroke-width="1"/><rect x="11.5" y="3" width="1.5" height="1.5" fill="#20e020"/><path d="M1 11.5h16" stroke="#c8d0d8" stroke-width="1"/><path d="M6.5 9.5l5 5M11.5 9.5l-5 5" stroke="#f01010" stroke-width="1.6"/></svg>
<span class="t" style="left:261.5px;top:1001px;font-size:12px;color:#fff;letter-spacing:-0.263px;">ZZZZ-618950-AFCBF</span>
<div style="left:1662px;top:910px;width:17px;height:100px;background:#7297bb;"></div>
<div style="left:1663px;top:912px;width:14px;height:14px;background:#1d2a38;border:1px solid #3a5270;box-sizing:border-box;"></div>
<svg style="left:1663px;top:912px;" width="14" height="14" viewBox="0 0 14 14"><path d="M3.5 9 L7 5 L10.5 9Z" fill="#5a7fa6"/></svg>
<div style="left:1663px;top:995px;width:14px;height:13px;background:#1d2a38;border:1px solid #3a5270;box-sizing:border-box;"></div>
<svg style="left:1663px;top:995px;" width="14" height="13" viewBox="0 0 14 13"><path d="M3.5 4.5 L7 8.5 L10.5 4.5Z" fill="#5a7fa6"/></svg>
<div style="left:1664px;top:932px;width:13px;height:2px;background:#1d2a38;"></div></div>
<div class="L " style="left:0px;top:0px;width:1680px;height:1010px;pointer-events:none;"><div style="left:297px;top:360px;width:1050px;height:650px;border-radius:8px;box-shadow:0 1px 5px 1px rgba(0,0,0,.55);"></div></div>
<div class="L " style="left:297px;top:360px;width:1050px;height:650px;border-radius:7px 7px 6px 6px;background:#26262a;"><div style="left:0px;top:0px;width:660px;height:65px;background:linear-gradient(100deg,#7c8194 0%,#80859a 18%,#747a8e 30%,#7e8498 42%,#6d7388 55%,#7b8196 70%,#747a8c 100%);"></div>
<div style="left:0px;top:65px;width:8px;height:58px;background:#6f7488;"></div>
<div style="left:0px;top:123px;width:8px;height:22px;background:#5b7da0;"></div>
<div style="left:0px;top:145px;width:8px;height:376px;background:#27272b;"></div>
<div style="left:0px;top:520px;width:8px;height:30px;background:#2f3d4e;"></div>
<div style="left:0px;top:550px;width:8px;height:100px;background:#6e96be;"></div>
<div style="left:0px;top:642px;width:1050px;height:8px;background:linear-gradient(#7098c0,#5f88b2);"></div>
<div style="left:660px;top:0px;width:400px;height:65px;background:linear-gradient(108deg,#0c0e12 0%,#0e1014 40%,#17191d 52%,#2b2d32 60%,#1c1e22 66%,#222326 76%,#37373b 92%,#3a3a3e 100%);"></div>
<div style="left:1042px;top:65px;width:8px;height:58px;background:#27272b;"></div>
<div style="left:1042px;top:123px;width:8px;height:22px;background:#4e7093;"></div>
<div style="left:1042px;top:145px;width:8px;height:376px;background:#27272b;"></div>
<div style="left:1042px;top:520px;width:8px;height:30px;background:#2f3d4e;"></div>
<div style="left:1042px;top:550px;width:8px;height:100px;background:#6e96be;"></div>
<div style="left:0px;top:0px;width:1050px;height:650px;border-radius:7px 7px 6px 6px;border:1px solid rgba(10,12,16,.9);box-sizing:border-box;box-shadow:inset 0 0 0 1px rgba(255,255,255,.6);"></div>
<div style="left:940px;top:1px;width:104px;height:20px;border:1px solid rgba(255,255,255,.55);border-top:none;border-radius:0 0 5px 5px;box-sizing:border-box;background:linear-gradient(rgba(255,255,255,.14),rgba(255,255,255,.04) 50%,rgba(0,0,0,.1) 51%,rgba(255,255,255,.04));box-shadow:0 0 0 1px rgba(0,0,0,.6);"></div>
<div style="left:968px;top:1px;width:1px;height:19px;background:rgba(255,255,255,.5);"></div>
<div style="left:995px;top:1px;width:1px;height:19px;background:rgba(255,255,255,.5);"></div>
<div style="left:949px;top:11px;width:11px;height:4px;background:#f4f4f4;border:1px solid #333;box-sizing:border-box;"></div>
<div style="left:976px;top:5px;width:12px;height:10px;border:2.5px solid #f4f4f4;box-sizing:border-box;outline:1px solid rgba(40,40,40,.7);"></div>
<svg style="left:1011.5px;top:3.7px;" width="16" height="13" viewBox="0 0 16 13"><path d="M4 2.500 L12 10.500 M12 2.500 L4 10.500" stroke="#2a2a2e" stroke-width="4.4"/><path d="M4.300 2.800 L11.700 10.200 M11.700 2.800 L4.300 10.200" stroke="#f8f8f8" stroke-width="2.600"/></svg>
<svg style="left:9px;top:32px;" width="70" height="28" viewBox="0 0 70 28">
<defs><radialGradient id="nb1" cx="0.5" cy="0.25" r="0.8"><stop offset="0" stop-color="#d8dbe2"/><stop offset="0.5" stop-color="#a9adb8"/><stop offset="1" stop-color="#8e93a0"/></radialGradient></defs>
<rect x="2" y="3" width="54" height="23" rx="11.5" fill="rgba(60,64,76,.55)"/>
<circle cx="14.5" cy="14" r="11.5" fill="url(#nb1)" stroke="#5c606c" stroke-width="1.2"/>
<circle cx="42.5" cy="14" r="11.5" fill="url(#nb1)" stroke="#5c606c" stroke-width="1.2"/>
<path d="M8 14 L14 8.5 V12 H21 V16 H14 V19.5Z" fill="#c4c7cf" stroke="#9a9eaa" stroke-width="0.8"/>
<path d="M49 14 L43 8.5 V12 H36 V16 H43 V19.5Z" fill="#c4c7cf" stroke="#9a9eaa" stroke-width="0.8"/>
<path d="M59 12.5 h7 l-3.5 4z" fill="#b4b8c2"/>
</svg>
<div style="left:79px;top:35px;width:740px;height:22px;background:linear-gradient(#e6e8ec,#d6d9de);border:1px solid #5a5e68;box-sizing:border-box;box-shadow:inset 0 0 0 1px rgba(255,255,255,.7);border-radius:2px;"></div>
<svg style="left:83px;top:37px;" width="16" height="18" viewBox="0 0 16 18"><g fill="#1030e0" stroke="#9ab8ec" stroke-width="0.7"><rect x="1.500" y="1.500" width="3.600" height="3"/><rect x="8.500" y="1.500" width="3.600" height="3"/><rect x="1.500" y="7.500" width="3.600" height="3"/><rect x="8.500" y="7.500" width="3.600" height="3"/></g><path d="M7 11.500 l3 4 h-6z" fill="#10c060"/><path d="M0 16.500h14" stroke="#a0a4aa" stroke-width="0.8"/></svg>
<svg style="left:107px;top:42px;" width="5" height="8" viewBox="0 0 5 8"><path d="M0.3 0.3 L4.4 4 L0.3 7.700Z" fill="#000"/></svg>
<svg style="left:202.5px;top:42px;" width="5" height="8" viewBox="0 0 5 8"><path d="M0.3 0.3 L4.4 4 L0.3 7.700Z" fill="#000"/></svg>
<svg style="left:337.5px;top:42px;" width="5" height="8" viewBox="0 0 5 8"><path d="M0.3 0.3 L4.4 4 L0.3 7.700Z" fill="#000"/></svg>
<span class="t" style="left:119.5px;top:39.6px;font-size:12px;color:#4a4a4a;letter-spacing:-0.102px;">Control Panel</span>
<span class="t" style="left:214px;top:39.6px;font-size:12px;color:#4a4a4a;letter-spacing:0.005px;">Network and Internet</span>
<span class="t" style="left:348.5px;top:39.6px;font-size:12px;color:#4a4a4a;letter-spacing:-0.217px;">Network and Sharing Center</span>
<div style="left:802px;top:34px;width:239px;height:23px;border:1px solid rgba(20,22,26,.55);box-sizing:border-box;border-radius:2px;"></div>
<div style="left:803px;top:35px;width:237px;height:21px;background:linear-gradient(#cdcdcf,#c4c4c6);border:1px solid #e4e4e6;box-sizing:border-box;"></div>
<span class="t" style="left:809px;top:39.8px;font-size:12px;color:#6e6e6e;font-style:italic;letter-spacing:-0.32px;">Search Control Panel</span>
<svg style="left:1020px;top:37px;" width="18" height="18" viewBox="0 0 18 18"><defs><linearGradient id="mg1" x1="0" y1="0" x2="0" y2="1"><stop offset="0" stop-color="#38b0ec"/><stop offset="1" stop-color="#1c58b0"/></linearGradient></defs><path d="M7.200 10.800 L2.800 14.600" stroke="#1c4c9c" stroke-width="2.300" stroke-linecap="round"/><circle cx="10" cy="7.900" r="4" fill="#d8dce0" stroke="url(#mg1)" stroke-width="1.900"/></svg>
<div style="left:6px;top:63px;width:1038px;height:581px;border:1px solid rgba(255,255,255,.62);box-sizing:border-box;"></div>
<div style="left:7px;top:64px;width:1036px;height:579px;border:1px solid rgba(24,26,32,.92);box-sizing:border-box;"></div>
<div style="left:8px;top:65px;width:1034px;height:577px;background:#fff;"></div>
<div style="left:8px;top:65px;width:200px;height:577px;background:linear-gradient(115deg,#eef3fb 0%,#e6edf8 20%,#f0f4fb 34%,#e3ebf7 50%,#eaf0f9 66%,#e4ecf8 80%,#e9eff9 100%);"></div>
<span class="t" style="left:37.3px;top:80.9px;font-size:12px;color:#1b2770;">Control Panel Home</span>
<span class="t" style="left:37.3px;top:116.5px;font-size:12px;color:#1b2770;letter-spacing:-0.135px;">Change adapter settings</span>
<span class="t" style="left:37.3px;top:139.9px;font-size:12px;color:#1b2770;letter-spacing:-0.164px;">Change advanced sharing</span>
<span class="t" style="left:37.3px;top:154.8px;font-size:12px;color:#1b2770;letter-spacing:-0.08px;">settings</span>
<span class="t" style="left:37.3px;top:539.7px;font-size:12px;color:#6d6d6d;letter-spacing:-0.672px;">See also</span>
<span class="t" style="left:37.3px;top:562.8px;font-size:12px;color:#1b2770;letter-spacing:0.016px;">HomeGroup</span>
<span class="t" style="left:37.3px;top:585.8px;font-size:12px;color:#1b2770;letter-spacing:0.041px;">Internet Options</span>
<span class="t" style="left:37.3px;top:608.8px;font-size:12px;color:#1b2770;letter-spacing:-0.091px;">Windows Firewall</span>
<svg style="left:1023px;top:66px;" width="18" height="18" viewBox="0 0 18 18"><defs><radialGradient id="hp1" cx="0.5" cy="0.25" r="0.8"><stop offset="0" stop-color="#6a9cf0"/><stop offset="0.5" stop-color="#1c4cc0"/><stop offset="1" stop-color="#0a2a88"/></radialGradient></defs><circle cx="9" cy="9" r="8" fill="url(#hp1)" stroke="#8a94a8" stroke-width="1"/></svg>
<span class="t" style="left:1028.33px;top:69.4px;font-size:12px;color:#fff;font-weight:bold;">?</span>
<span class="t" style="left:231.4px;top:88px;font-size:16px;color:#1e3287;letter-spacing:-0.26px;">View your basic network information and set up connections</span>
<svg style="left:297px;top:112px;" width="34" height="32" viewBox="0 0 34 32">
<defs><linearGradient id="mon1" x1="0" y1="0" x2="1" y2="1"><stop offset="0" stop-color="#1020d8"/><stop offset="0.5" stop-color="#2848f0"/><stop offset="1" stop-color="#90b0f8"/></linearGradient></defs>
<ellipse cx="20" cy="27" rx="9" ry="3" fill="#d4d8dc" stroke="#b0b4b8" stroke-width="0.6"/>
<rect x="17.5" y="21" width="5" height="6" fill="#c0c4c8"/>
<path d="M3 8 L8 6 V22 L3 23Z" fill="#b4b8bc" stroke="#8a8e92" stroke-width="0.6"/>
<path d="M8 3 L31.5 5 L30.5 22 L9 20.5Z" fill="#e4e6ea" stroke="#a0a4a8" stroke-width="0.8"/>
<path d="M10.5 5 L29.5 6.8 L28.8 20 L11 18.6Z" fill="url(#mon1)"/>
<path d="M20 6 L29.5 6.8 L28.8 20 L24 19.6Z" fill="#a8c0f8" opacity="0.6"/>
</svg>
<svg style="left:277px;top:147px;transform:scale(.8);transform-origin:0 0;" width="22" height="20" viewBox="0 0 22 20"><defs><radialGradient id="hgb1" cx="0.4" cy="0.3" r="0.7"><stop offset="0" stop-color="#b8c8ff"/><stop offset="1" stop-color="#2038c0"/></radialGradient><radialGradient id="hgg1" cx="0.4" cy="0.3" r="0.7"><stop offset="0" stop-color="#c0f0b0"/><stop offset="1" stop-color="#208828"/></radialGradient></defs>
<circle cx="12" cy="4.5" r="3.5" fill="url(#hgb1)"/><circle cx="4.5" cy="9" r="4" fill="url(#hgb1)"/><circle cx="14.5" cy="13.5" r="4.2" fill="url(#hgb1)"/><circle cx="17.5" cy="8" r="2.5" fill="url(#hgb1)" opacity=".8"/><circle cx="10.5" cy="9" r="5" fill="url(#hgg1)"/></svg>
<svg style="left:250px;top:219px;" width="52" height="42" viewBox="0 0 52 42">
<g stroke="#b0742c" stroke-width="0.5">
<path d="M11 3 L47 8 L46.5 11 L10.5 6Z" fill="#e0a050"/>
<path d="M10.5 8 L46.5 13 L46 16 L10 11Z" fill="#d89848"/>
<path d="M10 13 L46 18 L45.5 21 L9.500 16Z" fill="#e0a050"/>
<path d="M2 19 L14 16.5 L46 24 L33 29Z" fill="#c88838"/>
</g>
<path d="M14 2 v15 M40 6 v14" stroke="#c8ccd4" stroke-width="2"/>
<path d="M10 21 v13 M14 23 v7 M33 29 v11 M42 26 v9" stroke="#c4c8d0" stroke-width="2.6"/>
<ellipse cx="26" cy="38" rx="20" ry="3" fill="#000" opacity="0.08"/>
</svg>
<svg style="left:249px;top:314px;" width="28" height="28" viewBox="0 0 28 28"><defs><linearGradient id="nm1" x1="0" y1="0.6" x2="1" y2="0.2"><stop offset="0" stop-color="#0808b8"/><stop offset="0.45" stop-color="#2038d8"/><stop offset="0.75" stop-color="#c0ccf8"/><stop offset="1" stop-color="#6078e8"/></linearGradient></defs><path d="M14 5 L26.500 6 L25.500 15.500 L14 14.500Z" fill="url(#nm1)" stroke="#d8dce4" stroke-width="0.9"/><path d="M6.500 7.500 L20 8.500 L19.300 18.500 L6 17Z" fill="url(#nm1)" stroke="#e0e2e8" stroke-width="0.9"/><path d="M13 18.500 l4 0.500 v1.500" stroke="#c8ccd0" stroke-width="1" fill="none"/><path d="M3.500 20.800 L20.500 25" stroke="#d2d6d6" stroke-width="3.400" stroke-linecap="round"/><path d="M8 21.800 L15.500 23.700" stroke="#10b858" stroke-width="3.800"/><path d="M12 20.800 L15.800 21.800" stroke="#0c8840" stroke-width="1.600"/><path d="M6 2.500 h4 v4 h4 v4 h-4 v4 h-4 v-4 h-4 v-4 h4z" fill="#92e474" stroke="#1ca01c" stroke-width="1.100"/></svg>
<svg style="left:249px;top:369px;" width="28" height="28" viewBox="0 0 28 28"><defs><linearGradient id="nm2" x1="0" y1="0.6" x2="1" y2="0.2"><stop offset="0" stop-color="#0808b8"/><stop offset="0.45" stop-color="#2038d8"/><stop offset="0.75" stop-color="#c0ccf8"/><stop offset="1" stop-color="#6078e8"/></linearGradient></defs><path d="M14 5 L26.500 6 L25.500 15.500 L14 14.500Z" fill="url(#nm2)" stroke="#d8dce4" stroke-width="0.9"/><path d="M6.500 7.500 L20 8.500 L19.300 18.500 L6 17Z" fill="url(#nm2)" stroke="#e0e2e8" stroke-width="0.9"/><path d="M13 18.500 l4 0.500 v1.500" stroke="#c8ccd0" stroke-width="1" fill="none"/><path d="M3.500 20.800 L20.500 25" stroke="#d2d6d6" stroke-width="3.400" stroke-linecap="round"/><path d="M8 21.800 L15.500 23.700" stroke="#10b858" stroke-width="3.800"/><path d="M12 20.800 L15.800 21.800" stroke="#0c8840" stroke-width="1.600"/><defs><linearGradient id="ar1" x1="0" y1="0" x2="1" y2="1"><stop offset="0" stop-color="#f88838"/><stop offset="1" stop-color="#e85810"/></linearGradient></defs><path d="M2 6.500 H7.500 V3.500 L13.500 9 L7.500 14.500 V11.500 H2Z" fill="url(#ar1)"/></svg>
<svg style="left:251px;top:428px;" width="26" height="24" viewBox="0 0 22 20"><defs><radialGradient id="hgb2" cx="0.4" cy="0.3" r="0.7"><stop offset="0" stop-color="#b8c8ff"/><stop offset="1" stop-color="#2038c0"/></radialGradient><radialGradient id="hgg2" cx="0.4" cy="0.3" r="0.7"><stop offset="0" stop-color="#c0f0b0"/><stop offset="1" stop-color="#208828"/></radialGradient></defs>
<circle cx="12" cy="4.5" r="3.5" fill="url(#hgb2)"/><circle cx="4.5" cy="9" r="4" fill="url(#hgb2)"/><circle cx="14.5" cy="13.5" r="4.2" fill="url(#hgb2)"/><circle cx="17.5" cy="8" r="2.5" fill="url(#hgb2)" opacity=".8"/><circle cx="10.5" cy="9" r="5" fill="url(#hgg2)"/></svg>
<svg style="left:251px;top:482px;" width="24" height="22" viewBox="0 0 24 22"><rect x="0.5" y="1.500" width="22" height="18" fill="#f4f4f4" stroke="#7a7e86"/><rect x="2" y="3" width="19" height="2" fill="#c8ccd4"/><path d="M6 9 L17 7" stroke="#2a48e0" stroke-width="3"/><path d="M4 15.500 L18 13" stroke="#b0b4b8" stroke-width="2.600"/><path d="M7 15 L15 13.500" stroke="#20c050" stroke-width="2.600"/></svg>
<span class="t" style="left:296.6px;top:149.5px;font-size:12px;color:#000;letter-spacing:-0.645px;">RAJAN-PC</span>
<span class="t" style="left:274.6px;top:166px;font-size:12px;color:#000;">(This computer)</span>
<span class="t" style="left:231.4px;top:187.6px;font-size:12px;color:#000;letter-spacing:-0.042px;">View your active networks</span>
<span class="t" style="left:309.6px;top:224.6px;font-size:12px;color:#000;font-weight:bold;letter-spacing:-0.062px;">Unidentified network</span>
<span class="t" style="left:309.6px;top:242.6px;font-size:12px;color:#000;letter-spacing:0.15px;">Public network</span>
<span class="t" style="left:231.4px;top:293.1px;font-size:12px;color:#000;letter-spacing:0.107px;">Change your networking settings</span>
<span class="t" style="left:285.4px;top:317.6px;font-size:12px;color:#0066cc;letter-spacing:-0.024px;">Set up a new connection or network</span>
<span class="t" style="left:285.4px;top:337.9px;font-size:12px;color:#000;letter-spacing:-0.15px;">Set up a wireless, broadband, dial-up, ad hoc, or VPN connection; or set up a router or access point.</span>
<span class="t" style="left:285.4px;top:372.9px;font-size:12px;color:#0066cc;letter-spacing:0.084px;">Connect to a network</span>
<span class="t" style="left:285.4px;top:392.6px;font-size:12px;color:#000;letter-spacing:-0.029px;">Connect or reconnect to a wireless, wired, dial-up, or VPN network connection.</span>
<span class="t" style="left:285.4px;top:427.9px;font-size:12px;color:#0066cc;letter-spacing:-0.014px;">Choose homegroup and sharing options</span>
<span class="t" style="left:285.4px;top:447.6px;font-size:12px;color:#000;letter-spacing:0.126px;">Access files and printers located on other network computers, or change sharing settings.</span>
<span class="t" style="left:285.4px;top:482.6px;font-size:12px;color:#0066cc;letter-spacing:0.05px;">Troubleshoot problems</span>
<span class="t" style="left:285.4px;top:502.6px;font-size:12px;color:#000;letter-spacing:0.036px;">Diagnose and repair network problems, or get troubleshooting information.</span></div>
<div class="L " style="left:0px;top:0px;width:1680px;height:1010px;"><div style="left:651px;top:298px;width:376px;height:456px;border-radius:8px;box-shadow:0 1px 4px 1px rgba(0,0,0,.45);"></div></div>
<div class="L " style="left:651px;top:298px;width:376px;height:456px;border-radius:7px;background:linear-gradient(90deg,#a0a5b5 0,#abb1c0 120px,#a3a9b9 200px,#989eae 236px,#bcc3d0 258px,#9096a4 270px,#3e3e43 280px,#38383c 294px,#4c3854 304px,#38383c 314px,#3c3c40 100%);"><div style="left:0px;top:30px;width:376px;height:426px;background:linear-gradient(90deg,#f4f7fb,#eef2f8 3%,#e4e8f0);"></div>
<div style="left:0px;top:0px;width:376px;height:456px;border-radius:7px;border:1px solid rgba(30,32,40,.8);box-sizing:border-box;box-shadow:inset 0 0 0 1px rgba(255,255,255,.6);"></div>
<svg style="left:12.5px;top:6.5px;" width="9" height="17" viewBox="0 0 9 17"><rect x="1" y="0.500" width="6" height="10.500" rx="2" fill="#e4ebf2" stroke="#8a98a8" stroke-width="1"/><rect x="3.300" y="2.500" width="1.400" height="6" fill="#9aa8b8"/><rect x="2" y="11.500" width="4" height="2" fill="#7ab8ea"/><rect x="2" y="13.500" width="1.500" height="2.500" fill="#2a80d8"/><rect x="4.500" y="13.500" width="1.500" height="2.500" fill="#2a80d8"/></svg>
<span class="t" style="left:29.5px;top:8.3px;font-size:12px;color:#1a1a1a;letter-spacing:-0.152px;">Local Area Connection Status</span>
<div style="left:323px;top:0px;width:47px;height:19px;border:1px solid rgba(150,150,156,.75);border-top:none;border-radius:0 0 5px 5px;box-sizing:border-box;background:linear-gradient(rgba(255,255,255,.08),rgba(255,255,255,.03) 50%,rgba(0,0,0,.08) 51%,rgba(255,255,255,.03));box-shadow:0 0 0 1px rgba(20,20,24,.7);"></div>
<svg style="left:338.5px;top:3px;" width="16" height="13" viewBox="0 0 16 13"><path d="M4 2.500 L12 10.500 M12 2.500 L4 10.500" stroke="#3c3c40" stroke-width="4.4"/><path d="M4.300 2.800 L11.700 10.200 M11.700 2.800 L4.300 10.200" stroke="#f8f8f8" stroke-width="2.600"/></svg>
<div style="left:7px;top:30px;width:363px;height:419px;background:#f0f0f0;border:1px solid #6d727c;box-sizing:border-box;"></div>
<div style="left:14px;top:42px;width:350px;height:400px;background:#fff;border:1px solid #8a8f98;box-sizing:border-box;"></div></div>
<div class="L " style="left:0px;top:0px;width:1680px;height:1010px;"><div style="left:667px;top:314px;width:375px;height:473px;border-radius:8px;box-shadow:0 1px 5px 1px rgba(0,0,0,.5);"></div></div>
<div class="L " style="left:667px;top:314px;width:375px;height:473px;border-radius:7px;background:linear-gradient(100deg,#f6f9fc 0%,#eef4fb 8%,#f4f9fe 22%,#dfeaf8 40%,#f4fbff 60%,#eef8ff 90%,#e8f0f8 100%);"><div style="left:253px;top:-2px;width:90px;height:14px;background:linear-gradient(90deg,rgba(84,90,100,0),rgba(84,90,100,.95) 12%,rgba(100,106,116,.9) 60%,rgba(110,116,126,.0));filter:blur(2.5px);"></div>
<div style="left:363px;top:0px;width:14px;height:480px;background:linear-gradient(90deg,rgba(64,64,70,0),#46464c 50%,#404046);"></div>
<div style="left:328px;top:2px;width:50px;height:24px;background:linear-gradient(90deg,rgba(90,94,104,0),rgba(90,94,104,.5) 60%,rgba(64,64,70,.9));filter:blur(2px);"></div>
<div style="left:0px;top:0px;width:375px;height:473px;border-radius:7px;border:1px solid rgba(40,44,54,.8);box-sizing:border-box;box-shadow:inset 0 0 0 1px rgba(255,255,255,.7);"></div>
<svg style="left:12px;top:6.5px;" width="9" height="17" viewBox="0 0 9 17"><rect x="1" y="0.500" width="6" height="10.500" rx="2" fill="#e4ebf2" stroke="#8a98a8" stroke-width="1"/><rect x="3.300" y="2.500" width="1.400" height="6" fill="#9aa8b8"/><rect x="2" y="11.500" width="4" height="2" fill="#7ab8ea"/><rect x="2" y="13.500" width="1.500" height="2.500" fill="#2a80d8"/><rect x="4.500" y="13.500" width="1.500" height="2.500" fill="#2a80d8"/></svg>
<span class="t" style="left:29.4px;top:8.3px;font-size:12px;color:#000;letter-spacing:-0.074px;">Local Area Connection Properties</span>
<div style="left:324px;top:0px;width:46px;height:19px;border:1px solid rgba(120,126,140,.8);border-top:none;border-radius:0 0 5px 5px;box-sizing:border-box;background:linear-gradient(rgba(255,255,255,.35),rgba(255,255,255,.15) 50%,rgba(150,155,165,.2) 51%,rgba(255,255,255,.2));box-shadow:inset 0 0 0 1px rgba(255,255,255,.5);"></div>
<svg style="left:339px;top:3px;" width="16" height="13" viewBox="0 0 16 13"><path d="M4 2.500 L12 10.500 M12 2.500 L4 10.500" stroke="#3c3c40" stroke-width="4.4"/><path d="M4.300 2.800 L11.700 10.200 M11.700 2.800 L4.300 10.200" stroke="#f8f8f8" stroke-width="2.600"/></svg>
<div style="left:7px;top:28px;width:363px;height:438px;background:#f0f0f0;border:1px solid #7a808c;box-sizing:border-box;"></div>
<div style="left:14px;top:56px;width:347px;height:400px;background:#fff;border:1px solid #898c95;box-sizing:border-box;"></div>
<div style="left:83px;top:38px;width:45px;height:19px;background:linear-gradient(#f2f2f2,#ebebeb 50%,#dddddd 51%,#cfcfcf);border:1px solid #898c95;border-bottom:none;box-sizing:border-box;"></div>
<div style="left:14px;top:36px;width:70px;height:21px;background:#fff;border:1px solid #898c95;border-bottom:none;box-sizing:border-box;"></div>
<span class="t" style="left:21px;top:41.3px;font-size:11px;color:#000;letter-spacing:-0.115px;">Networking</span>
<span class="t" style="left:87.5px;top:42.8px;font-size:11px;color:#000;letter-spacing:-0.404px;">Sharing</span>
<span class="t" style="left:28px;top:70.5px;font-size:11px;color:#000;letter-spacing:-0.107px;">Connect using:</span>
<span class="t" style="left:28px;top:147.5px;font-size:11px;color:#000;letter-spacing:-0.098px;">This connection uses the following items:</span>
<div style="left:29px;top:89px;width:330px;height:28px;background:#fff;border:1px solid #abadb3;box-sizing:border-box;"></div>
<div style="left:29px;top:166px;width:330px;height:130px;background:#fff;border:1px solid #828790;box-sizing:border-box;"></div>
<div style="left:29px;top:311px;width:96px;height:22px;background:linear-gradient(#f2f2f2,#ebebeb 50%,#dddddd 51%,#cfcfcf);border:1px solid #707070;border-radius:3px;box-sizing:border-box;"></div>
<div style="left:29px;top:351px;width:330px;height:90px;border:1px solid #d5dfe5;border-radius:3px;box-sizing:border-box;"></div></div>
<div class="L " style="left:0px;top:0px;width:1680px;height:1010px;"><div style="left:701px;top:388px;width:413px;height:460px;border-radius:8px;box-shadow:3px 6px 13px 3px rgba(0,0,0,.7), 0 0 2px 1px rgba(0,0,0,.5);"></div></div>
<div class="L " style="left:701px;top:388px;width:413px;height:460px;border-radius:7px;background:linear-gradient(100deg,#c6dcf4 0%,#d6e6f7 12%,#b8d3f0 24%,#dbe9f8 40%,#bdd6f1 56%,#cfe1f5 72%,#b4cfee 100%);"><div style="left:0px;top:0px;width:413px;height:460px;border-radius:7px;border:1px solid rgba(30,34,44,.85);box-sizing:border-box;box-shadow:inset 0 0 0 1px rgba(255,255,255,.75);"></div>
<div style="left:405px;top:1px;width:8px;height:40px;background:linear-gradient(90deg,#eef3f8,#cfd9e4 60%,#aab4c0);"></div>
<div style="left:405px;top:37px;width:8px;height:423px;background:linear-gradient(90deg,#c4dcf6,#a8ccf4 60%,#9cc0ea);"></div>
<div style="left:0px;top:0px;width:413px;height:460px;border-radius:7px;border:1px solid rgba(30,34,44,.85);box-sizing:border-box;box-shadow:inset 0 0 0 1px rgba(255,255,255,.75);"></div>
<span class="t" style="left:7.8px;top:9px;font-size:12px;color:#000;letter-spacing:-0.044px;text-shadow:0 0 6px #fff,0 0 6px #fff;">Internet Protocol Version 4 (TCP/IPv4) Properties</span>
<div style="left:331px;top:1px;width:29px;height:19px;border:1px solid #5f6a7a;border-top:none;border-radius:0 0 0 5px;box-sizing:border-box;background:linear-gradient(#e6edf6,#c3cfdf 48%,#9fb0c6 52%,#b9c8da);box-shadow:inset 0 0 0 1px rgba(255,255,255,.6);"></div>
<span class="t" style="left:341.52px;top:4px;font-size:13px;color:#fff;font-weight:bold;text-shadow:0 0 1px #222,0 0 1px #222,0 0 1px #222,0 0 2px #222;">?</span>
<div style="left:359px;top:1px;width:48px;height:19px;border:1px solid #5a1c14;border-top:none;border-radius:0 0 5px 0;box-sizing:border-box;background:linear-gradient(#e9a99c,#d9786a 45%,#c43c28 52%,#d8604a);box-shadow:inset 0 0 0 1px rgba(255,255,255,.45);"></div>
<svg style="left:375px;top:3px;" width="16" height="13" viewBox="0 0 16 13"><path d="M4 2.500 L12 10.500 M12 2.500 L4 10.500" stroke="#4a2420" stroke-width="4.4"/><path d="M4.300 2.800 L11.700 10.200 M11.700 2.800 L4.300 10.200" stroke="#fff" stroke-width="2.600"/></svg>
<div style="left:7px;top:29px;width:400px;height:425px;background:#f0f0f0;border:1px solid #6a7484;box-sizing:border-box;"></div>
<div style="left:14px;top:57px;width:384px;height:359px;background:#fff;border:1px solid #898c95;box-sizing:border-box;"></div>
<div style="left:14px;top:37px;width:53px;height:21px;background:#fff;border:1px solid #898c95;border-bottom:none;box-sizing:border-box;"></div>
<span class="t" style="left:21.5px;top:42.4px;font-size:11px;color:#000;letter-spacing:-0.357px;">General</span>
<span class="t" style="left:29px;top:72px;font-size:11px;color:#000;letter-spacing:-0.051px;">You can get IP settings assigned automatically if your network supports</span>
<span class="t" style="left:29px;top:85px;font-size:11px;color:#000;">this capability. Otherwise, you need to ask your network administrator</span>
<span class="t" style="left:29px;top:98px;font-size:11px;color:#000;letter-spacing:0.043px;">for the appropriate IP settings.</span>
<div style="left:30px;top:159px;width:356px;height:94px;border:1px solid #d5dfe5;border-radius:3px;box-sizing:border-box;"></div>
<div style="left:37px;top:153px;width:160px;height:13px;background:#fff;"></div>
<svg style="left:38px;top:133px;" width="12" height="12" viewBox="0 0 12 12"><defs><radialGradient id="rb527" cx="0.5" cy="0.5" r="0.5"><stop offset="0" stop-color="#fdfdfd"/><stop offset="0.6" stop-color="#e4e6e8"/><stop offset="1" stop-color="#c8cacc"/></radialGradient></defs><circle cx="6" cy="6" r="5.400" fill="#fff" stroke="#8e8f8f" stroke-width="1.1"/><circle cx="6" cy="6" r="3.900" fill="url(#rb527)"/></svg>
<span class="t" style="left:53.5px;top:133px;font-size:11px;color:#000;letter-spacing:-0.112px;">Obtain an IP address automatically</span>
<svg style="left:38px;top:154px;" width="12" height="12" viewBox="0 0 12 12"><defs><radialGradient id="rb548" cx="0.5" cy="0.5" r="0.5"><stop offset="0" stop-color="#fdfdfd"/><stop offset="0.6" stop-color="#e4e6e8"/><stop offset="1" stop-color="#c8cacc"/></radialGradient></defs><circle cx="6" cy="6" r="5.400" fill="#fff" stroke="#8e8f8f" stroke-width="1.1"/><circle cx="6" cy="6" r="3.900" fill="url(#rb548)"/><circle cx="6" cy="6" r="3.300" fill="#16416e"/><circle cx="6" cy="6" r="2.300" fill="#1c8fd8"/><circle cx="5.400" cy="5.200" r="1.100" fill="#9adcfa"/></svg>
<span class="t" style="left:53.5px;top:154px;font-size:11px;color:#000;letter-spacing:-0.081px;">Use the following IP address:</span>
<span class="t" style="left:41.6px;top:178px;font-size:11px;color:#000;letter-spacing:-0.095px;">IP address:</span>
<span class="t" style="left:41.6px;top:204px;font-size:11px;color:#000;letter-spacing:-0.206px;">Subnet mask:</span>
<span class="t" style="left:41.6px;top:230px;font-size:11px;color:#000;letter-spacing:0.104px;">Default gateway:</span>
<div style="left:216px;top:173px;width:125px;height:20px;background:#fff;border:1px solid #dbdfe6;border-top-color:#abadb3;border-bottom-color:#e3e9ef;box-sizing:border-box;"></div>
<span class="t" style="left:224.82px;top:178px;font-size:11px;color:#000;">192</span>
<span class="t" style="left:254.82px;top:178px;font-size:11px;color:#000;">168</span>
<span class="t" style="left:290.94px;top:178px;font-size:11px;color:#000;">1</span>
<span class="t" style="left:317.88px;top:178px;font-size:11px;color:#000;">55</span>
<span class="t" style="left:247.47px;top:178px;font-size:11px;color:#000;">.</span>
<span class="t" style="left:277.47px;top:178px;font-size:11px;color:#000;">.</span>
<span class="t" style="left:307.47px;top:178px;font-size:11px;color:#000;">.</span>
<div style="left:216px;top:199px;width:125px;height:20px;background:#fff;border:1px solid #dbdfe6;border-top-color:#abadb3;border-bottom-color:#e3e9ef;box-sizing:border-box;"></div>
<span class="t" style="left:224.82px;top:204px;font-size:11px;color:#000;">255</span>
<span class="t" style="left:254.82px;top:204px;font-size:11px;color:#000;">255</span>
<span class="t" style="left:284.82px;top:204px;font-size:11px;color:#000;">255</span>
<span class="t" style="left:320.94px;top:204px;font-size:11px;color:#000;">0</span>
<span class="t" style="left:247.47px;top:204px;font-size:11px;color:#000;">.</span>
<span class="t" style="left:277.47px;top:204px;font-size:11px;color:#000;">.</span>
<span class="t" style="left:307.47px;top:204px;font-size:11px;color:#000;">.</span>
<div style="left:216px;top:225px;width:125px;height:20px;background:#fff;border:1px solid #dbdfe6;border-top-color:#abadb3;border-bottom-color:#e3e9ef;box-sizing:border-box;"></div>
<span class="t" style="left:224.82px;top:230px;font-size:11px;color:#000;">192</span>
<span class="t" style="left:254.82px;top:230px;font-size:11px;color:#000;">168</span>
<span class="t" style="left:290.94px;top:230px;font-size:11px;color:#000;">1</span>
<span class="t" style="left:320.94px;top:230px;font-size:11px;color:#000;">1</span>
<span class="t" style="left:247.47px;top:230px;font-size:11px;color:#000;">.</span>
<span class="t" style="left:277.47px;top:230px;font-size:11px;color:#000;">.</span>
<span class="t" style="left:307.47px;top:230px;font-size:11px;color:#000;">.</span>
<div style="left:30px;top:295px;width:356px;height:67px;border:1px solid #d5dfe5;border-radius:3px;box-sizing:border-box;"></div>
<div style="left:37px;top:288px;width:214px;height:13px;background:#fff;"></div>
<svg style="left:38px;top:267px;" width="12" height="12" viewBox="0 0 12 12"><defs><radialGradient id="rb661" cx="0.5" cy="0.5" r="0.5"><stop offset="0" stop-color="#fdfdfd"/><stop offset="0.6" stop-color="#e4e6e8"/><stop offset="1" stop-color="#c8cacc"/></radialGradient></defs><circle cx="6" cy="6" r="5.400" fill="#fff" stroke="#c2c2c2" stroke-width="1.1"/><circle cx="6" cy="6" r="3.900" fill="url(#rb661)"/></svg>
<span class="t" style="left:53.5px;top:267px;font-size:11px;color:#838383;letter-spacing:-0.151px;">Obtain DNS server address automatically</span>
<svg style="left:38px;top:289px;" width="12" height="12" viewBox="0 0 12 12"><defs><radialGradient id="rb683" cx="0.5" cy="0.5" r="0.5"><stop offset="0" stop-color="#fdfdfd"/><stop offset="0.6" stop-color="#e4e6e8"/><stop offset="1" stop-color="#c8cacc"/></radialGradient></defs><circle cx="6" cy="6" r="5.400" fill="#fff" stroke="#8e8f8f" stroke-width="1.1"/><circle cx="6" cy="6" r="3.900" fill="url(#rb683)"/><circle cx="6" cy="6" r="3.300" fill="#16416e"/><circle cx="6" cy="6" r="2.300" fill="#1c8fd8"/><circle cx="5.400" cy="5.200" r="1.100" fill="#9adcfa"/></svg>
<span class="t" style="left:53.5px;top:289px;font-size:11px;color:#000;letter-spacing:-0.164px;">Use the following DNS server addresses:</span>
<span class="t" style="left:41.6px;top:313.7px;font-size:11px;color:#000;letter-spacing:-0.131px;">Preferred DNS server:</span>
<span class="t" style="left:41.6px;top:339.4px;font-size:11px;color:#000;letter-spacing:-0.079px;">Alternate DNS server:</span>
<div style="left:216px;top:308px;width:125px;height:20px;background:#fff;border:1px solid #dbdfe6;border-top-color:#abadb3;border-bottom-color:#e3e9ef;box-sizing:border-box;"></div>
<span class="t" style="left:230.94px;top:313px;font-size:11px;color:#000;">8</span>
<span class="t" style="left:260.94px;top:313px;font-size:11px;color:#000;">8</span>
<span class="t" style="left:290.94px;top:313px;font-size:11px;color:#000;">8</span>
<span class="t" style="left:320.94px;top:313px;font-size:11px;color:#000;">8</span>
<span class="t" style="left:247.47px;top:313px;font-size:11px;color:#000;">.</span>
<span class="t" style="left:277.47px;top:313px;font-size:11px;color:#000;">.</span>
<span class="t" style="left:307.47px;top:313px;font-size:11px;color:#000;">.</span>
<div style="left:216px;top:334px;width:125px;height:20px;background:#fff;border:1px solid #dbdfe6;border-top-color:#abadb3;border-bottom-color:#e3e9ef;box-sizing:border-box;"></div>
<span class="t" style="left:230.94px;top:339px;font-size:11px;color:#000;">8</span>
<span class="t" style="left:260.94px;top:339px;font-size:11px;color:#000;">8</span>
<span class="t" style="left:290.94px;top:339px;font-size:11px;color:#000;">4</span>
<span class="t" style="left:320.94px;top:339px;font-size:11px;color:#000;">4</span>
<span class="t" style="left:247.47px;top:339px;font-size:11px;color:#000;">.</span>
<span class="t" style="left:277.47px;top:339px;font-size:11px;color:#000;">.</span>
<span class="t" style="left:307.47px;top:339px;font-size:11px;color:#000;">.</span>
<div style="left:42px;top:379px;width:13px;height:13px;background:linear-gradient(135deg,#dcdcdc,#fff);border:1px solid #8e8f8f;box-sizing:border-box;box-shadow:inset 0 0 0 1px #f4f4f4;"></div>
<span class="t" style="left:57.8px;top:381px;font-size:11px;color:#000;letter-spacing:-0.023px;">Validate settings upon exit</span>
<div style="left:297px;top:380px;width:88px;height:21px;background:linear-gradient(#f2f2f2,#ebebeb 50%,#dddddd 51%,#cfcfcf);border:1px solid #707070;box-shadow:inset 0 0 0 1px rgba(255,255,255,.8);border-radius:3px;box-sizing:border-box;"></div>
<span class="t" style="left:311.5px;top:385.7px;font-size:11px;color:#000;letter-spacing:0.091px;">Advanced...</span>
<div style="left:245px;top:424px;width:73px;height:21px;background:linear-gradient(#eaf6fd,#d9f0fc 50%,#bee6fd 51%,#a7d9f5);border:1px solid #3c7fb1;box-shadow:inset 0 0 0 1px #48d8fb;border-radius:3px;box-sizing:border-box;"></div>
<span class="t" style="left:273.75px;top:429.7px;font-size:11px;color:#000;letter-spacing:-0.406px;">OK</span>
<div style="left:326px;top:424px;width:73px;height:21px;background:linear-gradient(#f2f2f2,#ebebeb 50%,#dddddd 51%,#cfcfcf);border:1px solid #707070;box-shadow:inset 0 0 0 1px rgba(255,255,255,.8);border-radius:3px;box-sizing:border-box;"></div>
<span class="t" style="left:346.75px;top:429.7px;font-size:11px;color:#000;letter-spacing:-0.55px;">Cancel</span></div>
<div class="L " style="left:0px;top:1010px;width:1680px;height:40px;background:linear-gradient(90deg,#8a9db1 0px,#8e9fb0 380px,#9dadbc 540px,#9c9ea6 600px,#7e686e 680px,#4a3a40 712px,#56464c 740px,#83737a 776px,#4c363e 812px,#28232b 842px,#1e1e24 867px,#15171d 1026px,#14161c 1075px,#0c0e13 1150px,#0b0c10 1400px,#1a1418 1440px,#30262c 1480px,#5e5660 1510px,#8094aa 1538px,#8ca1b7 1680px);"><div style="left:0px;top:0px;width:1680px;height:1px;background:rgba(190,200,210,.55);"></div>
<div style="left:0px;top:1px;width:1680px;height:1px;background:rgba(255,255,255,.12);"></div>
<div style="left:1026px;top:1px;width:100px;height:39px;background:linear-gradient(113deg,rgba(90,108,142,0) 8%,rgba(90,108,142,.75) 30%,rgba(96,116,152,.8) 40%,rgba(60,72,98,.3) 55%,rgba(60,72,98,0) 75%);"></div>
<svg style="left:7px;top:0px;" width="40" height="40" viewBox="0 0 40 40">
<defs><linearGradient id="orb" x1="0" y1="0" x2="0" y2="1"><stop offset="0" stop-color="#a4bccf"/><stop offset="0.46" stop-color="#6f93b3"/><stop offset="0.5" stop-color="#0d4f8c"/><stop offset="0.8" stop-color="#0a70b8"/><stop offset="1" stop-color="#19c8f0"/></linearGradient></defs>
<circle cx="20" cy="19.600" r="18" fill="url(#orb)" stroke="#16406e" stroke-width="1"/>
<circle cx="20" cy="19.600" r="16.900" fill="none" stroke="rgba(200,230,255,.5)" stroke-width="0.9"/>
<path d="M10.800 10.500 Q14.500 8.300 19.200 10.200 L17.800 17.500 Q13.500 15.800 9.300 17.600Z" fill="#f05a22"/>
<path d="M20.800 10.900 Q25 13 30.200 11 L28.700 18.300 Q24 20.300 19.400 18.200Z" fill="#86c434"/>
<path d="M8.900 19.400 Q13.300 17.600 17.500 19.300 L16 26.700 Q11.800 25 7.400 26.800Z" fill="#3ea2ea"/>
<path d="M19 20 Q23.500 22 28.400 20 L26.900 27.300 Q22.200 29.300 17.600 27.300Z" fill="#fcc022"/>
</svg>
<div style="left:59px;top:1px;width:159px;height:38px;border:1px solid rgba(30,36,46,.75);border-radius:3px;box-sizing:border-box;box-shadow:inset 0 0 0 1px rgba(255,255,255,.38);background:linear-gradient(rgba(255,255,255,.3),rgba(255,255,255,.16) 50%,rgba(255,255,255,.08) 51%,rgba(255,255,255,.16));"></div>
<svg style="left:65px;top:3px;" width="36" height="34" viewBox="0 0 36 34"><path d="M13 4 L24 5.500 L24 29 L13 31Z" fill="#eed98c" stroke="#d8c070" stroke-width="0.6"/><path d="M5 3 L8 2 L12.500 6 L12.500 32.500 L6 29Z" fill="#f4e4a0" stroke="#d8c070" stroke-width="0.6"/><path d="M20 21 h5.500 v8 l-5.500 1.500z" fill="#f2e098"/><rect x="23.600" y="21.500" width="1" height="6" fill="#fff"/></svg>
<span class="t" style="left:105px;top:13.8px;font-size:12px;color:#fff;letter-spacing:-0.273px;text-shadow:0 0 3px rgba(0,0,0,.7),0 1px 1px rgba(0,0,0,.5);">ZZZZ-618950-AF...</span>
<div style="left:221px;top:1px;width:159px;height:38px;border:1px solid rgba(30,36,46,.75);border-radius:3px;box-sizing:border-box;box-shadow:inset 0 0 0 1px rgba(255,255,255,.38);background:linear-gradient(rgba(255,255,255,.3),rgba(255,255,255,.16) 50%,rgba(255,255,255,.08) 51%,rgba(255,255,255,.16));"></div>
<svg style="left:227px;top:3px;" width="36" height="34" viewBox="0 0 36 34"><circle cx="17" cy="17" r="14.500" fill="#e8443a"/><path d="M17 17 L4.500 9.800 A14.500 14.500 0 0 0 10 29.700Z" fill="#30a050"/><path d="M17 17 L10 29.700 A14.500 14.500 0 0 0 31.500 17Z" fill="#f8c020"/><path d="M17 17 L31.500 17 A14.500 14.500 0 0 0 29.500 9.800 L17 9.800Z" fill="#e8443a"/><circle cx="17" cy="17" r="6.600" fill="#fff"/><circle cx="17" cy="17" r="5.200" fill="#4088f0"/></svg>
<span class="t" style="left:267px;top:13.8px;font-size:12px;color:#fff;letter-spacing:-0.183px;text-shadow:0 0 3px rgba(0,0,0,.7),0 1px 1px rgba(0,0,0,.5);">(2) IP Prikim Cam...</span>
<div style="left:383px;top:1px;width:159px;height:38px;border:1px solid rgba(30,36,46,.75);border-radius:3px;box-sizing:border-box;box-shadow:inset 0 0 0 1px rgba(255,255,255,.38);background:linear-gradient(rgba(255,255,255,.3),rgba(255,255,255,.16) 50%,rgba(255,255,255,.08) 51%,rgba(255,255,255,.16));"></div>
<svg style="left:389px;top:3px;" width="36" height="34" viewBox="0 0 36 34"><defs><linearGradient id="cm1" x1="0" y1="0" x2="0" y2="1"><stop offset="0" stop-color="#8a8a8a"/><stop offset="1" stop-color="#3a3a3a"/></linearGradient></defs><rect x="3" y="2" width="30" height="30" rx="4" fill="url(#cm1)"/><circle cx="18" cy="17" r="10" fill="#0a0a0a"/><circle cx="18" cy="17" r="6" fill="#1a1a1e" stroke="#444" stroke-width="1.500"/><circle cx="16" cy="14.500" r="1.800" fill="#888"/></svg>
<span class="t" style="left:429px;top:13.8px;font-size:12px;color:#fff;letter-spacing:-0.276px;text-shadow:0 0 3px rgba(0,0,0,.7),0 1px 1px rgba(0,0,0,.5);">P2P Client</span>
<div style="left:545px;top:1px;width:159px;height:38px;border:1px solid rgba(30,36,46,.75);border-radius:3px;box-sizing:border-box;box-shadow:inset 0 0 0 1px rgba(255,255,255,.38);background:linear-gradient(rgba(255,255,255,.2),rgba(255,255,255,.1) 50%,rgba(255,255,255,.03) 51%,rgba(255,255,255,.1));"></div>
<svg style="left:551px;top:3px;" width="36" height="34" viewBox="0 0 36 34"><circle cx="18" cy="18" r="12.500" fill="#3aa0e8"/><circle cx="18" cy="18" r="7" fill="#a0aab4" opacity=".0"/><path d="M10.500 18.500 h15 q0 -7.500 -7.500 -7.500 q-7.500 0 -7.500 7.500 q0 7.500 7.500 7.500 q5 0 7 -4" fill="none" stroke="#fff" stroke-width="3.600"/><path d="M4 27 Q-2 14 14 5 Q26 -1 32 6" fill="none" stroke="#f0b820" stroke-width="2.400"/></svg>
<span class="t" style="left:591px;top:13.8px;font-size:12px;color:#fff;letter-spacing:-0.1px;text-shadow:0 0 3px rgba(0,0,0,.7),0 1px 1px rgba(0,0,0,.5);">This page can’t b...</span>
<div style="left:707px;top:1px;width:161px;height:38px;border:1px solid rgba(30,36,46,.75);border-radius:3px;box-sizing:border-box;box-shadow:inset 0 0 0 1px rgba(255,255,255,.38);background:linear-gradient(rgba(255,255,255,.1),rgba(255,255,255,.03) 50%,rgba(0,0,0,.05) 51%,rgba(255,255,255,.02));"></div>
<svg style="left:713px;top:3px;" width="36" height="34" viewBox="0 0 36 34"><g fill="#1838d8" stroke="#c0d0f4" stroke-width="1"><path d="M5 3 L12 5 V12 L5 11Z"/><path d="M16 4 L24 2 V10 L16 12Z"/><path d="M4 14 L12 16 V24 L4 22Z"/><path d="M16 16 L25 14 V23 L16 25Z"/></g><path d="M2 27 L24 31" stroke="#b8bcc0" stroke-width="3" stroke-linecap="round"/><path d="M6 30 L20 26" stroke="#20c850" stroke-width="3.600" stroke-linecap="round"/></svg>
<span class="t" style="left:753px;top:13.8px;font-size:12px;color:#fff;letter-spacing:-0.133px;text-shadow:0 0 3px rgba(0,0,0,.7),0 1px 1px rgba(0,0,0,.5);">Network and Shar...</span>
<div style="left:867px;top:1px;width:159px;height:38px;border:1px solid rgba(30,36,46,.75);border-radius:3px;box-sizing:border-box;box-shadow:inset 0 0 0 1px rgba(255,255,255,.38);background:linear-gradient(#b4b6ba,#a0a2a8 50%,#909298 51%,#9c9ea4);"></div>
<svg style="left:873px;top:3px;" width="36" height="34" viewBox="0 0 36 34"><rect x="12" y="1" width="12" height="21" rx="3" fill="#c8d0d8" stroke="#5a6878" stroke-width="1.200"/><rect x="16.500" y="5" width="3" height="13" fill="#eef2f6" stroke="#8a98a8" stroke-width="0.600"/><rect x="14" y="22.500" width="8" height="5" fill="#58a8e0"/><rect x="14" y="28" width="3" height="4" fill="#2878d0"/><rect x="19" y="28" width="3" height="4" fill="#2878d0"/></svg>
<span class="t" style="left:913px;top:13.8px;font-size:12px;color:#fff;letter-spacing:-0.134px;text-shadow:0 0 3px rgba(0,0,0,.7),0 1px 1px rgba(0,0,0,.5);">Local Area Conne...</span>
<svg style="left:1466px;top:14px;" width="14" height="14" viewBox="0 0 14 14"><path d="M3.800 9.500 L7.500 5.300 L11.200 9.500Z" fill="#fff"/></svg>
<svg style="left:1488px;top:11px;" width="20" height="20" viewBox="0 0 20 20"><path d="M4 3 Q10 5 14 2 Q18 5 15 10 Q19 14 16 17 Q10 15 6 18 Q1 15 5 10 Q1 6 4 3Z" fill="#ff7800"/><circle cx="10.500" cy="9.500" r="3" fill="none" stroke="#fff" stroke-width="1.600"/></svg>
<svg style="left:1513px;top:11px;" width="20" height="20" viewBox="0 0 20 20"><path d="M3 2 V18" stroke="#fff" stroke-width="1.800"/><path d="M4.500 3.500 Q8 2 11 4.500 Q14 6.500 17 5 L15 11 Q12 12.500 9 10.500 Q6.500 9 4.500 10.500Z" fill="#fff"/></svg>
<svg style="left:1537px;top:11px;" width="20" height="20" viewBox="0 0 20 20"><rect x="5.500" y="5.500" width="11" height="9" fill="#8a98a4" stroke="#fff" stroke-width="1.400"/><path d="M8 17.500 h7" stroke="#fff" stroke-width="1.600"/><path d="M3.500 2 v6 M1.500 4 h4.500 v3 h-4.500z" stroke="#fff" stroke-width="1.200" fill="none"/><path d="M3.500 8 v9" stroke="#fff" stroke-width="1.200"/></svg>
<svg style="left:1560px;top:11px;" width="20" height="20" viewBox="0 0 20 20"><path d="M2 7.500 h3.500 l5 -4.500 v14 l-5 -4.500 h-3.500z" fill="#e8ecf0" stroke="#fff" stroke-width="0.800"/><path d="M12.500 7 q2 3 0 6 M14.800 5 q3.200 5 0 10" stroke="#fff" stroke-width="1.300" fill="none"/></svg>
<span class="t" style="left:1611.25px;top:7px;font-size:12px;color:#fff;letter-spacing:-0.633px;">16:32</span>
<span class="t" style="left:1595.6px;top:23.6px;font-size:12px;color:#fff;letter-spacing:-0.229px;">08/03/2018</span>
<div style="left:1665px;top:1px;width:15px;height:39px;background:linear-gradient(135deg,rgba(255,255,255,.28),rgba(255,255,255,.08) 50%,rgba(255,255,255,.2));border-left:1px solid rgba(40,50,60,.6);box-shadow:inset 1px 0 0 rgba(255,255,255,.4);"></div></div>
</body></html>
